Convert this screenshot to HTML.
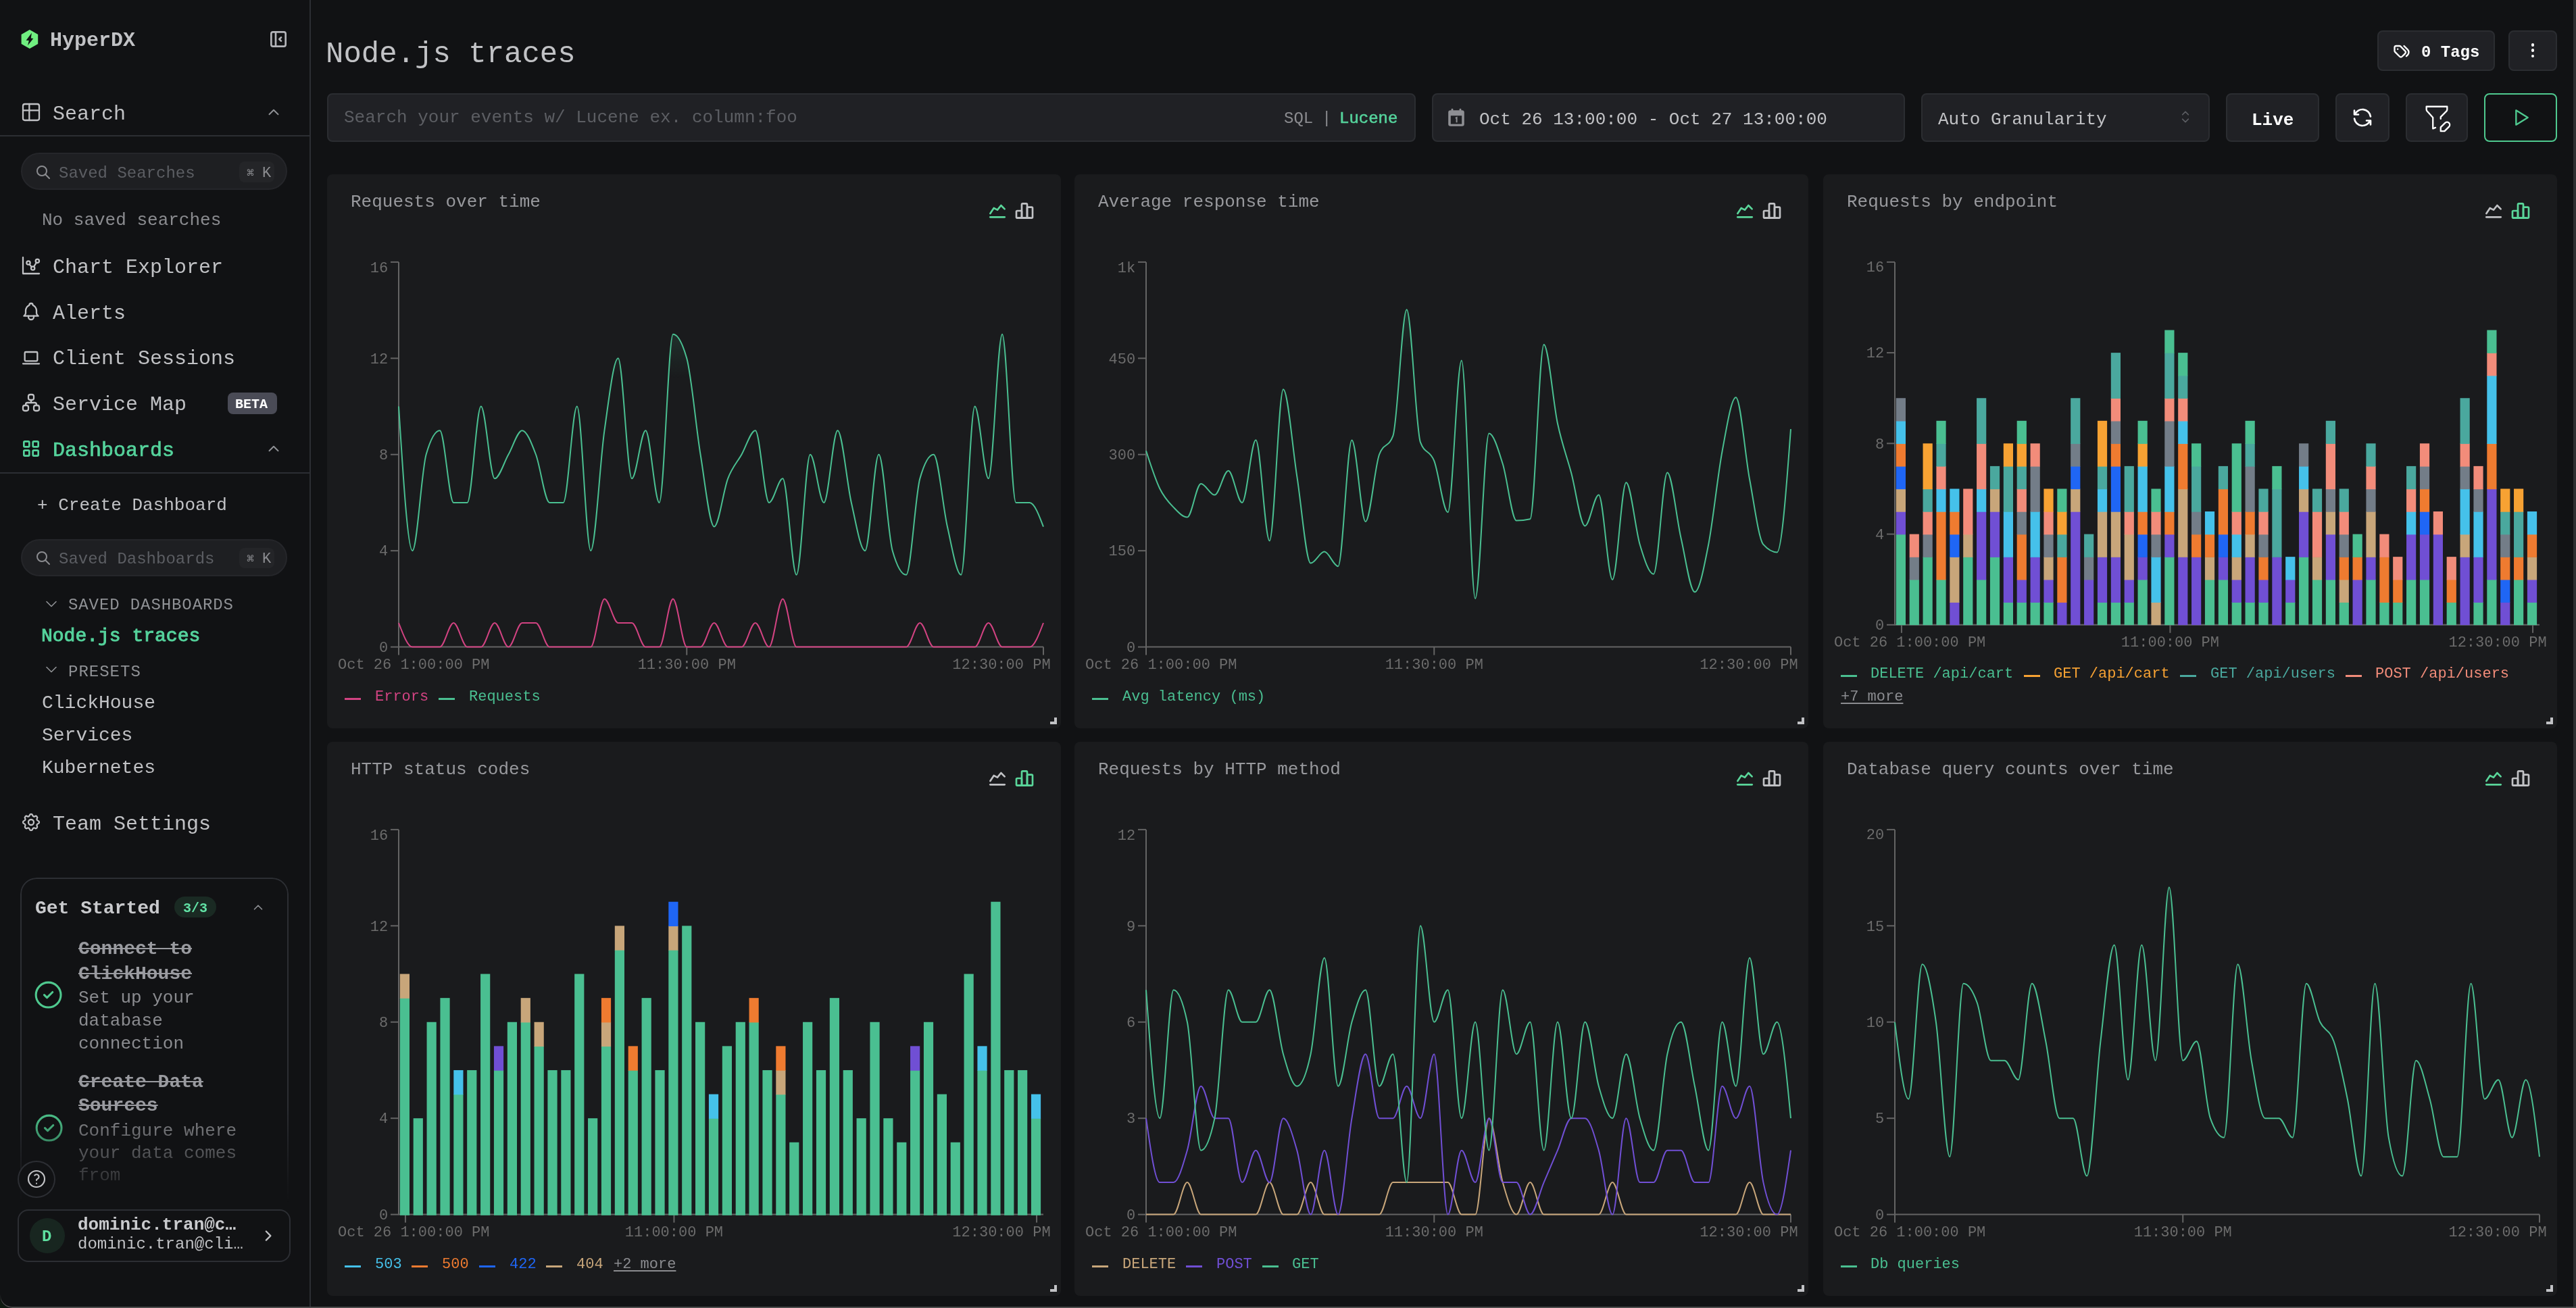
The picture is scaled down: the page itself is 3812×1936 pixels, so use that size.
<!DOCTYPE html>
<html><head><meta charset="utf-8"><title>Node.js traces</title><style>
html,body{margin:0;padding:0;background:#0f1a11;overflow:hidden}
#root{position:relative;width:1906px;height:968px;zoom:2;background:#111214;overflow:hidden;border-bottom-left-radius:9px;font-family:'Liberation Mono', monospace}
#sb{position:absolute;left:0;top:0;width:229px;height:968px;background:#111214;border-right:1px solid #2c2e33}
.t{position:absolute;white-space:pre;line-height:1;font-family:'Liberation Mono', monospace;-webkit-font-smoothing:antialiased;will-change:transform}
.pill{position:absolute;border-radius:14px;background:#1e1f22;border:1px solid #25262a;box-sizing:border-box}
.kbd{position:absolute;border-radius:4px;background:#242528}
.inp{position:absolute;border-radius:4px;background:#202125;border:1px solid #2b2d31;box-sizing:border-box}
.btn{position:absolute;border-radius:4px;background:#202125;border:1px solid #2b2d31;box-sizing:border-box}
.panel{position:absolute;background:#1a1b1d;border-radius:4px;overflow:hidden}
.ch{position:absolute;left:0;top:0;will-change:transform}
.ax{font-family:'Liberation Mono', monospace;font-size:11px;fill:#6c6c6c}
</style></head>
<body><div id="root"><div id="sb"><svg style="position:absolute;left:15.5px;top:21.5px" width="13" height="15" viewBox="0 0 26 30"><path d="M12.9 0.9L25.2 7.9V21.9L12.9 28.9L0.6 21.9V7.9Z" fill="#70ef80"/><path d="M15.9 5.8L7.6 16.8L11.8 17.1L10.1 24.2L18.3 13.9L14.8 13.6Z" fill="#111214"/></svg><div class="t" style="left:36.85px;top:22.36px;font-size:15px;color:#c1c2c5;font-weight:700;">HyperDX</div><svg style="position:absolute;left:198.00px;top:21.00px;" width="16" height="16" viewBox="0 0 24 24" fill="none" stroke="#b4b5ba" stroke-width="2" stroke-linecap="round" stroke-linejoin="round"><path d="M4 6a2 2 0 0 1 2 -2h12a2 2 0 0 1 2 2v12a2 2 0 0 1 -2 2h-12a2 2 0 0 1 -2 -2z"/><path d="M9 4v16"/><path d="M15 10l-2 2l2 2"/></svg><svg style="position:absolute;left:15.00px;top:75.00px;" width="16" height="16" viewBox="0 0 24 24" fill="none" stroke="#c1c2c5" stroke-width="1.7" stroke-linecap="round" stroke-linejoin="round"><path d="M3 5a2 2 0 0 1 2 -2h14a2 2 0 0 1 2 2v14a2 2 0 0 1 -2 2h-14a2 2 0 0 1 -2 -2v-14z"/><path d="M3 10h18"/><path d="M10 3v18"/></svg><div class="t" style="left:38.80px;top:76.91px;font-size:15px;color:#c1c2c5;font-weight:400;">Search</div><svg style="position:absolute;left:196.00px;top:76.50px;" width="13" height="13" viewBox="0 0 24 24" fill="none" stroke="#909296" stroke-width="1.8" stroke-linecap="round" stroke-linejoin="round"><path d="M6 15l6 -6l6 6"/></svg><div style="position:absolute;left:0;top:100px;width:229px;height:1px;background:#2c2e33"></div><div class="pill" style="left:15.3px;top:113.2px;width:197.2px;height:27.5px"></div><svg style="position:absolute;left:26.00px;top:121.30px;" width="12" height="12" viewBox="0 0 24 24" fill="none" stroke="#8b8c90" stroke-width="2" stroke-linecap="round" stroke-linejoin="round"><path d="M10 10m-7 0a7 7 0 1 0 14 0a7 7 0 1 0 -14 0"/><path d="M21 21l-6 -6"/></svg><div class="t" style="left:43.60px;top:122.31px;font-size:12px;color:#5c5e63;font-weight:400;">Saved Searches</div><div class="kbd" style="left:177px;top:119.7px;width:26px;height:15.2px"></div><div class="t" style="left:182.50px;top:123.91px;font-size:9px;color:#8b8c90;font-weight:400;">&#8984;</div><div class="t" style="left:194.00px;top:122.87px;font-size:11px;color:#8b8c90;font-weight:400;">K</div><div class="t" style="left:30.80px;top:156.74px;font-size:13px;color:#8b8c90;font-weight:400;">No saved searches</div><svg style="position:absolute;left:15.00px;top:188.50px;" width="16" height="16" viewBox="0 0 24 24" fill="none" stroke="#c1c2c5" stroke-width="1.7" stroke-linecap="round" stroke-linejoin="round"><path d="M3 3v18h18"/><path d="M9 9m-2 0a2 2 0 1 0 4 0a2 2 0 1 0 -4 0"/><path d="M19 7m-2 0a2 2 0 1 0 4 0a2 2 0 1 0 -4 0"/><path d="M14 15m-2 0a2 2 0 1 0 4 0a2 2 0 1 0 -4 0"/><path d="M10.16 10.62l2.34 2.88"/><path d="M15.088 13.328l2.837 -4.586"/></svg><div class="t" style="left:38.80px;top:190.31px;font-size:15px;color:#c1c2c5;font-weight:400;">Chart Explorer</div><svg style="position:absolute;left:15.00px;top:222.50px;" width="16" height="16" viewBox="0 0 24 24" fill="none" stroke="#c1c2c5" stroke-width="1.7" stroke-linecap="round" stroke-linejoin="round"><path d="M10 5a2 2 0 1 1 4 0a7 7 0 0 1 4 6v3a4 4 0 0 0 2 3h-16a4 4 0 0 0 2 -3v-3a7 7 0 0 1 4 -6"/><path d="M9 17v1a3 3 0 0 0 6 0v-1"/></svg><div class="t" style="left:38.80px;top:224.31px;font-size:15px;color:#c1c2c5;font-weight:400;">Alerts</div><svg style="position:absolute;left:15.00px;top:256.40px;" width="16" height="16" viewBox="0 0 24 24" fill="none" stroke="#c1c2c5" stroke-width="1.7" stroke-linecap="round" stroke-linejoin="round"><path d="M3 19l18 0"/><path d="M5 6m0 1a1 1 0 0 1 1 -1h12a1 1 0 0 1 1 1v8a1 1 0 0 1 -1 1h-12a1 1 0 0 1 -1 -1z"/></svg><div class="t" style="left:38.80px;top:258.21px;font-size:15px;color:#c1c2c5;font-weight:400;">Client Sessions</div><svg style="position:absolute;left:15.00px;top:290.10px;" width="16" height="16" viewBox="0 0 24 24" fill="none" stroke="#c1c2c5" stroke-width="1.7" stroke-linecap="round" stroke-linejoin="round"><path d="M3 15m0 2a2 2 0 0 1 2 -2h2a2 2 0 0 1 2 2v2a2 2 0 0 1 -2 2h-2a2 2 0 0 1 -2 -2z"/><path d="M15 15m0 2a2 2 0 0 1 2 -2h2a2 2 0 0 1 2 2v2a2 2 0 0 1 -2 2h-2a2 2 0 0 1 -2 -2z"/><path d="M9 3m0 2a2 2 0 0 1 2 -2h2a2 2 0 0 1 2 2v2a2 2 0 0 1 -2 2h-2a2 2 0 0 1 -2 -2z"/><path d="M6 15v-1a2 2 0 0 1 2 -2h8a2 2 0 0 1 2 2v1"/><path d="M12 9l0 3"/></svg><div class="t" style="left:38.80px;top:291.91px;font-size:15px;color:#c1c2c5;font-weight:400;">Service Map</div><div style="position:absolute;left:168.7px;top:290.5px;width:36.2px;height:16px;border-radius:4px;background:#4a4b56"></div><div class="t" style="left:174.20px;top:294.54px;font-size:10px;color:#ffffff;font-weight:700;">BETA</div><svg style="position:absolute;left:15.00px;top:324.20px;" width="16" height="16" viewBox="0 0 24 24" fill="none" stroke="#55d39c" stroke-width="2" stroke-linecap="round" stroke-linejoin="round"><path d="M4 4m0 1a1 1 0 0 1 1 -1h4a1 1 0 0 1 1 1v4a1 1 0 0 1 -1 1h-4a1 1 0 0 1 -1 -1z"/><path d="M14 4m0 1a1 1 0 0 1 1 -1h4a1 1 0 0 1 1 1v4a1 1 0 0 1 -1 1h-4a1 1 0 0 1 -1 -1z"/><path d="M4 14m0 1a1 1 0 0 1 1 -1h4a1 1 0 0 1 1 1v4a1 1 0 0 1 -1 1h-4a1 1 0 0 1 -1 -1z"/><path d="M14 14m0 1a1 1 0 0 1 1 -1h4a1 1 0 0 1 1 1v4a1 1 0 0 1 -1 1h-4a1 1 0 0 1 -1 -1z"/></svg><div class="t" style="left:38.80px;top:326.01px;font-size:15px;color:#55d39c;font-weight:400;-webkit-text-stroke:0.35px #55d39c">Dashboards</div><svg style="position:absolute;left:196.00px;top:325.50px;" width="13" height="13" viewBox="0 0 24 24" fill="none" stroke="#909296" stroke-width="1.8" stroke-linecap="round" stroke-linejoin="round"><path d="M6 15l6 -6l6 6"/></svg><div style="position:absolute;left:0;top:349.5px;width:229px;height:1px;background:#2c2e33"></div><div class="t" style="left:27.60px;top:367.54px;font-size:13px;color:#c1c2c5;font-weight:400;">+ Create Dashboard</div><div class="pill" style="left:15.3px;top:398.8px;width:197.2px;height:27.5px"></div><svg style="position:absolute;left:26.00px;top:406.90px;" width="12" height="12" viewBox="0 0 24 24" fill="none" stroke="#8b8c90" stroke-width="2" stroke-linecap="round" stroke-linejoin="round"><path d="M10 10m-7 0a7 7 0 1 0 14 0a7 7 0 1 0 -14 0"/><path d="M21 21l-6 -6"/></svg><div class="t" style="left:43.60px;top:407.91px;font-size:12px;color:#5c5e63;font-weight:400;">Saved Dashboards</div><div class="kbd" style="left:177px;top:405.3px;width:26px;height:15.2px"></div><div class="t" style="left:182.50px;top:409.51px;font-size:9px;color:#8b8c90;font-weight:400;">&#8984;</div><div class="t" style="left:194.00px;top:408.47px;font-size:11px;color:#8b8c90;font-weight:400;">K</div><svg style="position:absolute;left:31.10px;top:439.90px;" width="14" height="14" viewBox="0 0 24 24" fill="none" stroke="#909296" stroke-width="1.4" stroke-linecap="round" stroke-linejoin="round"><path d="M6 9l6 6l6 -6"/></svg><div class="t" style="left:50.60px;top:442.21px;font-size:12px;color:#909296;font-weight:400;letter-spacing:0.45px">SAVED DASHBOARDS</div><div class="t" style="left:30.60px;top:463.97px;font-size:14px;color:#55d39c;font-weight:400;-webkit-text-stroke:0.5px #55d39c">Node.js traces</div><svg style="position:absolute;left:31.10px;top:488.60px;" width="14" height="14" viewBox="0 0 24 24" fill="none" stroke="#909296" stroke-width="1.4" stroke-linecap="round" stroke-linejoin="round"><path d="M6 9l6 6l6 -6"/></svg><div class="t" style="left:50.60px;top:491.61px;font-size:12px;color:#909296;font-weight:400;letter-spacing:0.5px">PRESETS</div><div class="t" style="left:31.20px;top:513.27px;font-size:14px;color:#c1c2c5;font-weight:400;">ClickHouse</div><div class="t" style="left:31.20px;top:537.47px;font-size:14px;color:#c1c2c5;font-weight:400;">Services</div><div class="t" style="left:31.20px;top:561.37px;font-size:14px;color:#c1c2c5;font-weight:400;">Kubernetes</div><svg style="position:absolute;left:15.00px;top:600.50px;" width="16" height="16" viewBox="0 0 24 24" fill="none" stroke="#c1c2c5" stroke-width="1.7" stroke-linecap="round" stroke-linejoin="round"><path d="M10.325 4.317c.426 -1.756 2.924 -1.756 3.35 0a1.724 1.724 0 0 0 2.573 1.066c1.543 -.94 3.31 .826 2.37 2.37a1.724 1.724 0 0 0 1.065 2.572c1.756 .426 1.756 2.924 0 3.35a1.724 1.724 0 0 0 -1.066 2.573c.94 1.543 -.826 3.31 -2.37 2.37a1.724 1.724 0 0 0 -2.572 1.065c-.426 1.756 -2.924 1.756 -3.35 0a1.724 1.724 0 0 0 -2.573 -1.066c-1.543 .94 -3.31 -.826 -2.37 -2.37a1.724 1.724 0 0 0 -1.065 -2.572c-1.756 -.426 -1.756 -2.924 0 -3.35a1.724 1.724 0 0 0 1.066 -2.573c-.94 -1.543 .826 -3.31 2.37 -2.37c1 .608 2.296 .07 2.572 -1.065z"/><path d="M9 12a3 3 0 1 0 6 0a3 3 0 0 0 -6 0"/></svg><div class="t" style="left:38.80px;top:602.31px;font-size:15px;color:#c1c2c5;font-weight:400;">Team Settings</div><div style="position:absolute;left:14.8px;top:649.7px;width:198.6px;height:250px;border:1px solid #2c2e33;border-bottom:none;border-radius:12px 12px 0 0;box-sizing:border-box;-webkit-mask-image:linear-gradient(#000 0,#000 170px,transparent 240px)"></div><div class="t" style="left:26.00px;top:665.27px;font-size:14px;color:#c9cacd;font-weight:700;">Get Started</div><div style="position:absolute;left:129.2px;top:663.5px;width:30.6px;height:15.7px;border-radius:8px;background:#1a2a23"></div><div class="t" style="left:135.70px;top:667.54px;font-size:10px;color:#62e3a6;font-weight:700;">3/3</div><svg style="position:absolute;left:185.50px;top:666.00px;" width="11" height="11" viewBox="0 0 24 24" fill="none" stroke="#909296" stroke-width="1.8" stroke-linecap="round" stroke-linejoin="round"><path d="M6 15l6 -6l6 6"/></svg><div id="gsmask" style="position:absolute;left:15px;top:690px;width:198px;height:200px;-webkit-mask-image:linear-gradient(#000 0,#000 130px,rgba(0,0,0,0.25) 185px,transparent 200px)"><svg style="position:absolute;left:8.60px;top:34.20px;" width="24.6" height="24.6" viewBox="0 0 24 24" fill="none" stroke="#4fc98f" stroke-width="1.5" stroke-linecap="round" stroke-linejoin="round"><path d="M12 12m-9 0a9 9 0 1 0 18 0a9 9 0 1 0 -18 0"/><path d="M9 12l2 2l4 -4"/></svg><div class="t" style="left:42.80px;top:5.27px;font-size:14px;color:#9a9ba0;font-weight:700;text-decoration:line-through">Connect to</div><div class="t" style="left:42.80px;top:23.87px;font-size:14px;color:#9a9ba0;font-weight:700;text-decoration:line-through">ClickHouse</div><div class="t" style="left:42.80px;top:42.24px;font-size:13px;color:#8b8c90;font-weight:400;">Set up your</div><div class="t" style="left:42.80px;top:59.04px;font-size:13px;color:#8b8c90;font-weight:400;">database</div><div class="t" style="left:42.80px;top:75.94px;font-size:13px;color:#8b8c90;font-weight:400;">connection</div><svg style="position:absolute;left:8.80px;top:132.50px;" width="24.6" height="24.6" viewBox="0 0 24 24" fill="none" stroke="#4fc98f" stroke-width="1.5" stroke-linecap="round" stroke-linejoin="round"><path d="M12 12m-9 0a9 9 0 1 0 18 0a9 9 0 1 0 -18 0"/><path d="M9 12l2 2l4 -4"/></svg><div class="t" style="left:42.80px;top:103.77px;font-size:14px;color:#9a9ba0;font-weight:700;text-decoration:line-through">Create Data</div><div class="t" style="left:42.80px;top:121.67px;font-size:14px;color:#9a9ba0;font-weight:700;text-decoration:line-through">Sources</div><div class="t" style="left:42.80px;top:140.44px;font-size:13px;color:#8b8c90;font-weight:400;">Configure where</div><div class="t" style="left:42.80px;top:157.24px;font-size:13px;color:#8b8c90;font-weight:400;">your data comes</div><div class="t" style="left:42.80px;top:173.74px;font-size:13px;color:#8b8c90;font-weight:400;">from</div></div><div style="position:absolute;left:13.2px;top:858.8px;width:27.8px;height:27.6px;border-radius:50%;border:1px solid #2c2e33;box-sizing:border-box;background:#111214"></div><svg style="position:absolute;left:19.10px;top:864.60px;" width="16" height="16" viewBox="0 0 24 24" fill="none" stroke="#c1c2c5" stroke-width="1.6" stroke-linecap="round" stroke-linejoin="round"><path d="M12 12m-9 0a9 9 0 1 0 18 0a9 9 0 1 0 -18 0"/><path d="M12 17l0 .01"/><path d="M12 13.5a1.5 1.5 0 0 1 1 -1.5a2.6 2.6 0 1 0 -3 -4"/></svg><div style="position:absolute;left:13.2px;top:895px;width:201.7px;height:38.8px;border-radius:8px;border:1px solid #2c2e33;box-sizing:border-box"></div><div style="position:absolute;left:22px;top:901.5px;width:25.9px;height:25.8px;border-radius:50%;background:#182620"></div><div class="t" style="left:31.00px;top:909.41px;font-size:12px;color:#5ee0a0;font-weight:700;">D</div><div class="t" style="left:57.60px;top:900.04px;font-size:13px;color:#c9cacd;font-weight:700;">dominic.tran@c&hellip;</div><div class="t" style="left:57.60px;top:915.01px;font-size:12px;color:#c1c2c5;font-weight:400;">dominic.tran@cli&hellip;</div><svg style="position:absolute;left:191.90px;top:907.90px;" width="13.1" height="13.1" viewBox="0 0 24 24" fill="none" stroke="#c1c2c5" stroke-width="2.1" stroke-linecap="round" stroke-linejoin="round"><path d="M9 6l6 6l-6 6"/></svg></div><div class="t" style="left:241.20px;top:29.05px;font-size:22px;color:#c1c2c5;font-weight:400;">Node.js traces</div><div class="btn" style="left:1759px;top:22.5px;width:87px;height:30px"></div><svg style="position:absolute;left:1770.00px;top:30.70px;" width="14" height="14" viewBox="0 0 24 24" fill="none" stroke="#ffffff" stroke-width="2" stroke-linecap="round" stroke-linejoin="round"><path d="M3 8v4.172a2 2 0 0 0 .586 1.414l5.71 5.71a2.41 2.41 0 0 0 3.408 0l3.592 -3.592a2.41 2.41 0 0 0 0 -3.408l-5.71 -5.71a2 2 0 0 0 -1.414 -.586h-4.172a2 2 0 0 0 -2 2z"/><path d="M18 19l1.592 -1.592a4.82 4.82 0 0 0 0 -6.816l-4.592 -4.592"/><path d="M7 10h-.01"/></svg><div class="t" style="left:1791.70px;top:32.91px;font-size:12px;color:#ffffff;font-weight:700;">0 Tags</div><div class="btn" style="left:1856px;top:22.5px;width:36px;height:30px"></div><div style="position:absolute;left:1872.8px;top:32.15px;width:2.4px;height:2.4px;border-radius:50%;background:#fff"></div><div style="position:absolute;left:1872.8px;top:36.20px;width:2.4px;height:2.4px;border-radius:50%;background:#fff"></div><div style="position:absolute;left:1872.8px;top:40.25px;width:2.4px;height:2.4px;border-radius:50%;background:#fff"></div><div class="inp" style="left:242px;top:69px;width:805.5px;height:36px"></div><div class="t" style="left:254.40px;top:80.44px;font-size:13px;color:#5c5e63;font-weight:400;">Search your events w/ Lucene ex. column:foo</div><div class="t" style="left:950.00px;top:82.21px;font-size:12px;color:#8b8c90;font-weight:400;">SQL</div><div class="t" style="left:978.00px;top:82.21px;font-size:12px;color:#8b8c90;font-weight:400;">|</div><div class="t" style="left:991.10px;top:82.21px;font-size:12px;color:#55d39c;font-weight:400;-webkit-text-stroke:0.3px #55d39c">Lucene</div><div class="inp" style="left:1059.5px;top:69px;width:350px;height:36px"></div><svg style="position:absolute;left:1071px;top:80px" width="13" height="14" viewBox="0 0 13 14"><rect x="0.6" y="1.6" width="11.8" height="11.8" rx="1.6" fill="#8e8f93"/><rect x="2.4" y="5.6" width="8.2" height="6.2" fill="#202124"/><rect x="2.8" y="0.4" width="1.4" height="2.4" rx="0.6" fill="#8e8f93"/><rect x="8.8" y="0.4" width="1.4" height="2.4" rx="0.6" fill="#8e8f93"/><path d="M5.9 7.4l0.9 -0.4v3.6" stroke="#8e8f93" stroke-width="1" fill="none"/></svg><div class="t" style="left:1094.30px;top:81.84px;font-size:13px;color:#c1c2c5;font-weight:400;">Oct 26 13:00:00 - Oct 27 13:00:00</div><div class="inp" style="left:1421.5px;top:69px;width:213.5px;height:36px"></div><div class="t" style="left:1434.20px;top:82.04px;font-size:13px;color:#c1c2c5;font-weight:400;">Auto Granularity</div><svg style="position:absolute;left:1610.50px;top:80.00px;" width="13" height="13" viewBox="0 0 24 24" fill="none" stroke="#5c5e63" stroke-width="1.6" stroke-linecap="round" stroke-linejoin="round"><path d="M8 9l4 -4l4 4"/><path d="M16 15l-4 4l-4 -4"/></svg><div class="btn" style="left:1647px;top:69px;width:69px;height:36px"></div><div class="t" style="left:1665.80px;top:82.64px;font-size:13px;color:#ffffff;font-weight:700;">Live</div><div class="btn" style="left:1728px;top:69px;width:40px;height:36px"></div><svg style="position:absolute;left:1739.10px;top:77.90px;" width="18" height="18" viewBox="0 0 24 24" fill="none" stroke="#ffffff" stroke-width="1.75" stroke-linecap="round" stroke-linejoin="round"><path d="M20 11a8.1 8.1 0 0 0 -15.5 -2m-.5 -4v4h4"/><path d="M4 13a8.1 8.1 0 0 0 15.5 2m.5 4v-4h-4"/></svg><div class="btn" style="left:1780px;top:69px;width:46px;height:36px"></div><svg style="position:absolute;left:1791.50px;top:75.80px;" width="23" height="23" viewBox="0 0 24 24" fill="none" stroke="#ffffff" stroke-width="1.2" stroke-linecap="round" stroke-linejoin="round"><path d="M10.97 19.25l-1.97 .75v-8.5l-4.48 -4.928a2 2 0 0 1 -.52 -1.345v-2.227h16v2.172a2 2 0 0 1 -.586 1.414l-4.414 4.414v1.5"/><path d="M18.42 15.61a2.1 2.1 0 0 1 2.97 2.97l-3.39 3.42h-3v-3l3.42 -3.39z"/></svg><div class="btn" style="left:1838px;top:69px;width:54px;height:36px;border-color:#4fc98f;background:#111214"></div><svg style="position:absolute;left:1857.00px;top:79.00px;" width="16" height="16" viewBox="0 0 24 24" fill="none" stroke="#4fc98f" stroke-width="1.8" stroke-linecap="round" stroke-linejoin="round"><path d="M7 4v16l13 -8z"/></svg><div class="panel" style="left:242px;top:129px;width:543px;height:410px"><div class="t" style="left:17.60px;top:14.04px;font-size:13px;color:#98999d;font-weight:400;">Requests over time</div><svg style="position:absolute;left:488.00px;top:18.85px;" width="16" height="16" viewBox="0 0 24 24" fill="none" stroke="#5ad69a" stroke-width="2" stroke-linecap="round" stroke-linejoin="round"><path d="M4 19l16 0"/><path d="M4 15l4 -6l4 2l4 -5l4 4"/></svg><svg style="position:absolute;left:508.20px;top:19.10px;" width="16" height="16" viewBox="0 0 24 24" fill="none" stroke="#c1c2c5" stroke-width="2" stroke-linecap="round" stroke-linejoin="round"><path d="M3 13a1 1 0 0 1 1 -1h4a1 1 0 0 1 1 1v6a1 1 0 0 1 -1 1h-4a1 1 0 0 1 -1 -1z"/><path d="M15 9a1 1 0 0 1 1 -1h4a1 1 0 0 1 1 1v10a1 1 0 0 1 -1 1h-4a1 1 0 0 1 -1 -1z"/><path d="M9 5a1 1 0 0 1 1 -1h4a1 1 0 0 1 1 1v14a1 1 0 0 1 -1 1h-4a1 1 0 0 1 -1 -1z"/><path d="M4 20h14"/></svg><svg class="ch" width="543" height="410" viewBox="0 0 543 410"><path d="M53.0,64.95V349.8H530.0" fill="none" stroke="#646464" stroke-width="1"/><path d="M47.0,349.80H53.0" stroke="#646464" stroke-width="1"/><text x="45.1" y="353.40" text-anchor="end" class="ax">0</text><path d="M47.0,278.59H53.0" stroke="#646464" stroke-width="1"/><text x="45.1" y="282.19" text-anchor="end" class="ax">4</text><path d="M47.0,207.38H53.0" stroke="#646464" stroke-width="1"/><text x="45.1" y="210.97" text-anchor="end" class="ax">8</text><path d="M47.0,136.16H53.0" stroke="#646464" stroke-width="1"/><text x="45.1" y="139.76" text-anchor="end" class="ax">12</text><path d="M47.0,64.95H53.0" stroke="#646464" stroke-width="1"/><text x="45.1" y="72.25" text-anchor="end" class="ax">16</text><path d="M53.00,349.8V355.8" stroke="#646464" stroke-width="1"/><path d="M266.13,349.8V355.8" stroke="#646464" stroke-width="1"/><path d="M530.00,349.8V355.8" stroke="#646464" stroke-width="1"/><text x="8.0" y="366.00" class="ax">Oct 26 1:00:00 PM</text><text x="266.13" y="366.00" text-anchor="middle" class="ax">11:30:00 PM</text><text x="535.3" y="366.00" text-anchor="end" class="ax">12:30:00 PM</text><defs><linearGradient id="g0_0" x1="0" y1="0" x2="0" y2="1"><stop offset="0" stop-color="#d24382" stop-opacity="0.13"/><stop offset="0.14" stop-color="#d24382" stop-opacity="0"/></linearGradient></defs><path d="M53.00,332.00C56.38,340.90,59.77,349.80,63.15,349.80C66.53,349.80,69.91,349.80,73.30,349.80C76.68,349.80,80.06,349.80,83.45,349.80C86.83,349.80,90.21,332.00,93.60,332.00C96.98,332.00,100.36,349.80,103.74,349.80C107.13,349.80,110.51,349.80,113.89,349.80C117.28,349.80,120.66,332.00,124.04,332.00C127.43,332.00,130.81,349.80,134.19,349.80C137.57,349.80,140.96,332.00,144.34,332.00C147.72,332.00,151.11,332.00,154.49,332.00C157.87,332.00,161.26,349.80,164.64,349.80C168.02,349.80,171.40,349.80,174.79,349.80C178.17,349.80,181.55,349.80,184.94,349.80C188.32,349.80,191.70,349.80,195.09,349.80C198.47,349.80,201.85,314.19,205.23,314.19C208.62,314.19,212.00,332.00,215.38,332.00C218.77,332.00,222.15,332.00,225.53,332.00C228.91,332.00,232.30,349.80,235.68,349.80C239.06,349.80,242.45,349.80,245.83,349.80C249.21,349.80,252.60,314.19,255.98,314.19C259.36,314.19,262.74,349.80,266.13,349.80C269.51,349.80,272.89,349.80,276.28,349.80C279.66,349.80,283.04,332.00,286.43,332.00C289.81,332.00,293.19,349.80,296.57,349.80C299.96,349.80,303.34,349.80,306.72,349.80C310.11,349.80,313.49,332.00,316.87,332.00C320.26,332.00,323.64,349.80,327.02,349.80C330.40,349.80,333.79,314.19,337.17,314.19C340.55,314.19,343.94,349.80,347.32,349.80C350.70,349.80,354.09,349.80,357.47,349.80C360.85,349.80,364.23,349.80,367.62,349.80C371.00,349.80,374.38,349.80,377.77,349.80C381.15,349.80,384.53,349.80,387.91,349.80C391.30,349.80,394.68,349.80,398.06,349.80C401.45,349.80,404.83,349.80,408.21,349.80C411.60,349.80,414.98,349.80,418.36,349.80C421.74,349.80,425.13,349.80,428.51,349.80C431.89,349.80,435.28,332.00,438.66,332.00C442.04,332.00,445.43,349.80,448.81,349.80C452.19,349.80,455.57,349.80,458.96,349.80C462.34,349.80,465.72,349.80,469.11,349.80C472.49,349.80,475.87,349.80,479.26,349.80C482.64,349.80,486.02,332.00,489.40,332.00C492.79,332.00,496.17,349.80,499.55,349.80C502.94,349.80,506.32,349.80,509.70,349.80C513.09,349.80,516.47,349.80,519.85,349.80C523.23,349.80,526.62,340.90,530.00,332.00L530.00,349.8L53.00,349.8Z" fill="url(#g0_0)" stroke="none"/><path d="M53.00,332.00C56.38,340.90,59.77,349.80,63.15,349.80C66.53,349.80,69.91,349.80,73.30,349.80C76.68,349.80,80.06,349.80,83.45,349.80C86.83,349.80,90.21,332.00,93.60,332.00C96.98,332.00,100.36,349.80,103.74,349.80C107.13,349.80,110.51,349.80,113.89,349.80C117.28,349.80,120.66,332.00,124.04,332.00C127.43,332.00,130.81,349.80,134.19,349.80C137.57,349.80,140.96,332.00,144.34,332.00C147.72,332.00,151.11,332.00,154.49,332.00C157.87,332.00,161.26,349.80,164.64,349.80C168.02,349.80,171.40,349.80,174.79,349.80C178.17,349.80,181.55,349.80,184.94,349.80C188.32,349.80,191.70,349.80,195.09,349.80C198.47,349.80,201.85,314.19,205.23,314.19C208.62,314.19,212.00,332.00,215.38,332.00C218.77,332.00,222.15,332.00,225.53,332.00C228.91,332.00,232.30,349.80,235.68,349.80C239.06,349.80,242.45,349.80,245.83,349.80C249.21,349.80,252.60,314.19,255.98,314.19C259.36,314.19,262.74,349.80,266.13,349.80C269.51,349.80,272.89,349.80,276.28,349.80C279.66,349.80,283.04,332.00,286.43,332.00C289.81,332.00,293.19,349.80,296.57,349.80C299.96,349.80,303.34,349.80,306.72,349.80C310.11,349.80,313.49,332.00,316.87,332.00C320.26,332.00,323.64,349.80,327.02,349.80C330.40,349.80,333.79,314.19,337.17,314.19C340.55,314.19,343.94,349.80,347.32,349.80C350.70,349.80,354.09,349.80,357.47,349.80C360.85,349.80,364.23,349.80,367.62,349.80C371.00,349.80,374.38,349.80,377.77,349.80C381.15,349.80,384.53,349.80,387.91,349.80C391.30,349.80,394.68,349.80,398.06,349.80C401.45,349.80,404.83,349.80,408.21,349.80C411.60,349.80,414.98,349.80,418.36,349.80C421.74,349.80,425.13,349.80,428.51,349.80C431.89,349.80,435.28,332.00,438.66,332.00C442.04,332.00,445.43,349.80,448.81,349.80C452.19,349.80,455.57,349.80,458.96,349.80C462.34,349.80,465.72,349.80,469.11,349.80C472.49,349.80,475.87,349.80,479.26,349.80C482.64,349.80,486.02,332.00,489.40,332.00C492.79,332.00,496.17,349.80,499.55,349.80C502.94,349.80,506.32,349.80,509.70,349.80C513.09,349.80,516.47,349.80,519.85,349.80C523.23,349.80,526.62,340.90,530.00,332.00" fill="none" stroke="#d24382" stroke-width="1"/><defs><linearGradient id="g0_1" x1="0" y1="0" x2="0" y2="1"><stop offset="0" stop-color="#4abf91" stop-opacity="0.13"/><stop offset="0.14" stop-color="#4abf91" stop-opacity="0"/></linearGradient></defs><path d="M53.00,171.77C56.38,225.18,59.77,278.59,63.15,278.59C66.53,278.59,69.91,219.24,73.30,207.38C76.68,195.51,80.06,189.57,83.45,189.57C86.83,189.57,90.21,242.98,93.60,242.98C96.98,242.98,100.36,242.98,103.74,242.98C107.13,242.98,110.51,171.77,113.89,171.77C117.28,171.77,120.66,225.18,124.04,225.18C127.43,225.18,130.81,213.31,134.19,207.38C137.57,201.44,140.96,189.57,144.34,189.57C147.72,189.57,151.11,198.47,154.49,207.38C157.87,216.28,161.26,242.98,164.64,242.98C168.02,242.98,171.40,242.98,174.79,242.98C178.17,242.98,181.55,171.77,184.94,171.77C188.32,171.77,191.70,278.59,195.09,278.59C198.47,278.59,201.85,213.31,205.23,189.57C208.62,165.83,212.00,136.16,215.38,136.16C218.77,136.16,222.15,225.18,225.53,225.18C228.91,225.18,232.30,189.57,235.68,189.57C239.06,189.57,242.45,242.98,245.83,242.98C249.21,242.98,252.60,118.36,255.98,118.36C259.36,118.36,262.74,124.29,266.13,136.16C269.51,148.03,272.89,186.60,276.28,207.38C279.66,228.15,283.04,260.78,286.43,260.78C289.81,260.78,293.19,234.08,296.57,225.18C299.96,216.28,303.34,213.31,306.72,207.38C310.11,201.44,313.49,189.57,316.87,189.57C320.26,189.57,323.64,242.98,327.02,242.98C330.40,242.98,333.79,225.18,337.17,225.18C340.55,225.18,343.94,296.39,347.32,296.39C350.70,296.39,354.09,207.38,357.47,207.38C360.85,207.38,364.23,242.98,367.62,242.98C371.00,242.98,374.38,189.57,377.77,189.57C381.15,189.57,384.53,228.15,387.91,242.98C391.30,257.82,394.68,278.59,398.06,278.59C401.45,278.59,404.83,207.38,408.21,207.38C411.60,207.38,414.98,266.72,418.36,278.59C421.74,290.46,425.13,296.39,428.51,296.39C431.89,296.39,435.28,237.05,438.66,225.18C442.04,213.31,445.43,207.38,448.81,207.38C452.19,207.38,455.57,245.95,458.96,260.78C462.34,275.62,465.72,296.39,469.11,296.39C472.49,296.39,475.87,171.77,479.26,171.77C482.64,171.77,486.02,225.18,489.40,225.18C492.79,225.18,496.17,118.36,499.55,118.36C502.94,118.36,506.32,242.98,509.70,242.98C513.09,242.98,516.47,242.98,519.85,242.98C523.23,242.98,526.62,251.88,530.00,260.78L530.00,349.8L53.00,349.8Z" fill="url(#g0_1)" stroke="none"/><path d="M53.00,171.77C56.38,225.18,59.77,278.59,63.15,278.59C66.53,278.59,69.91,219.24,73.30,207.38C76.68,195.51,80.06,189.57,83.45,189.57C86.83,189.57,90.21,242.98,93.60,242.98C96.98,242.98,100.36,242.98,103.74,242.98C107.13,242.98,110.51,171.77,113.89,171.77C117.28,171.77,120.66,225.18,124.04,225.18C127.43,225.18,130.81,213.31,134.19,207.38C137.57,201.44,140.96,189.57,144.34,189.57C147.72,189.57,151.11,198.47,154.49,207.38C157.87,216.28,161.26,242.98,164.64,242.98C168.02,242.98,171.40,242.98,174.79,242.98C178.17,242.98,181.55,171.77,184.94,171.77C188.32,171.77,191.70,278.59,195.09,278.59C198.47,278.59,201.85,213.31,205.23,189.57C208.62,165.83,212.00,136.16,215.38,136.16C218.77,136.16,222.15,225.18,225.53,225.18C228.91,225.18,232.30,189.57,235.68,189.57C239.06,189.57,242.45,242.98,245.83,242.98C249.21,242.98,252.60,118.36,255.98,118.36C259.36,118.36,262.74,124.29,266.13,136.16C269.51,148.03,272.89,186.60,276.28,207.38C279.66,228.15,283.04,260.78,286.43,260.78C289.81,260.78,293.19,234.08,296.57,225.18C299.96,216.28,303.34,213.31,306.72,207.38C310.11,201.44,313.49,189.57,316.87,189.57C320.26,189.57,323.64,242.98,327.02,242.98C330.40,242.98,333.79,225.18,337.17,225.18C340.55,225.18,343.94,296.39,347.32,296.39C350.70,296.39,354.09,207.38,357.47,207.38C360.85,207.38,364.23,242.98,367.62,242.98C371.00,242.98,374.38,189.57,377.77,189.57C381.15,189.57,384.53,228.15,387.91,242.98C391.30,257.82,394.68,278.59,398.06,278.59C401.45,278.59,404.83,207.38,408.21,207.38C411.60,207.38,414.98,266.72,418.36,278.59C421.74,290.46,425.13,296.39,428.51,296.39C431.89,296.39,435.28,237.05,438.66,225.18C442.04,213.31,445.43,207.38,448.81,207.38C452.19,207.38,455.57,245.95,458.96,260.78C462.34,275.62,465.72,296.39,469.11,296.39C472.49,296.39,475.87,171.77,479.26,171.77C482.64,171.77,486.02,225.18,489.40,225.18C492.79,225.18,496.17,118.36,499.55,118.36C502.94,118.36,506.32,242.98,509.70,242.98C513.09,242.98,516.47,242.98,519.85,242.98C523.23,242.98,526.62,251.88,530.00,260.78" fill="none" stroke="#4abf91" stroke-width="1"/></svg><div style="position:absolute;left:13.00px;top:387.40px;width:12px;height:1.5px;background:#d24382"></div><div class="t" style="left:35.40px;top:381.57px;font-size:11px;color:#d24382;font-weight:400;">Errors</div><div style="position:absolute;left:82.50px;top:387.40px;width:12px;height:1.5px;background:#4abf91"></div><div class="t" style="left:104.90px;top:381.57px;font-size:11px;color:#4abf91;font-weight:400;">Requests</div><div style="position:absolute;left:535.00px;top:402px;width:5px;height:5px;border-right:2px solid #c1c2c5;border-bottom:2px solid #c1c2c5;box-sizing:border-box"></div></div><div class="panel" style="left:795px;top:129px;width:543px;height:410px"><div class="t" style="left:17.60px;top:14.04px;font-size:13px;color:#98999d;font-weight:400;">Average response time</div><svg style="position:absolute;left:488.00px;top:18.85px;" width="16" height="16" viewBox="0 0 24 24" fill="none" stroke="#5ad69a" stroke-width="2" stroke-linecap="round" stroke-linejoin="round"><path d="M4 19l16 0"/><path d="M4 15l4 -6l4 2l4 -5l4 4"/></svg><svg style="position:absolute;left:508.20px;top:19.10px;" width="16" height="16" viewBox="0 0 24 24" fill="none" stroke="#c1c2c5" stroke-width="2" stroke-linecap="round" stroke-linejoin="round"><path d="M3 13a1 1 0 0 1 1 -1h4a1 1 0 0 1 1 1v6a1 1 0 0 1 -1 1h-4a1 1 0 0 1 -1 -1z"/><path d="M15 9a1 1 0 0 1 1 -1h4a1 1 0 0 1 1 1v10a1 1 0 0 1 -1 1h-4a1 1 0 0 1 -1 -1z"/><path d="M9 5a1 1 0 0 1 1 -1h4a1 1 0 0 1 1 1v14a1 1 0 0 1 -1 1h-4a1 1 0 0 1 -1 -1z"/><path d="M4 20h14"/></svg><svg class="ch" width="543" height="410" viewBox="0 0 543 410"><path d="M53.0,64.95V349.8H530.0" fill="none" stroke="#646464" stroke-width="1"/><path d="M47.0,349.80H53.0" stroke="#646464" stroke-width="1"/><text x="45.1" y="353.40" text-anchor="end" class="ax">0</text><path d="M47.0,278.59H53.0" stroke="#646464" stroke-width="1"/><text x="45.1" y="282.19" text-anchor="end" class="ax">150</text><path d="M47.0,207.38H53.0" stroke="#646464" stroke-width="1"/><text x="45.1" y="210.97" text-anchor="end" class="ax">300</text><path d="M47.0,136.16H53.0" stroke="#646464" stroke-width="1"/><text x="45.1" y="139.76" text-anchor="end" class="ax">450</text><path d="M47.0,64.95H53.0" stroke="#646464" stroke-width="1"/><text x="45.1" y="72.25" text-anchor="end" class="ax">1k</text><path d="M53.00,349.8V355.8" stroke="#646464" stroke-width="1"/><path d="M266.13,349.8V355.8" stroke="#646464" stroke-width="1"/><path d="M530.00,349.8V355.8" stroke="#646464" stroke-width="1"/><text x="8.0" y="366.00" class="ax">Oct 26 1:00:00 PM</text><text x="266.13" y="366.00" text-anchor="middle" class="ax">11:30:00 PM</text><text x="535.3" y="366.00" text-anchor="end" class="ax">12:30:00 PM</text><defs><linearGradient id="g1_0" x1="0" y1="0" x2="0" y2="1"><stop offset="0" stop-color="#4abf91" stop-opacity="0.13"/><stop offset="0.14" stop-color="#4abf91" stop-opacity="0"/></linearGradient></defs><path d="M53.00,204.62C56.38,215.14,59.77,225.66,63.15,232.63C66.53,239.60,69.91,242.93,73.30,246.45C76.68,249.97,80.06,253.76,83.45,253.76C86.83,253.76,90.21,228.98,93.60,228.98C96.98,228.98,100.36,237.28,103.74,237.28C107.13,237.28,110.51,219.34,113.89,219.34C117.28,219.34,120.66,242.98,124.04,242.98C127.43,242.98,130.81,196.60,134.19,196.60C137.57,196.60,140.96,271.23,144.34,271.23C147.72,271.23,151.11,159.14,154.49,159.14C157.87,159.14,161.26,202.07,164.64,223.52C168.02,244.96,171.40,287.80,174.79,287.80C178.17,287.80,181.55,279.30,184.94,279.30C188.32,279.30,191.70,290.08,195.09,290.08C198.47,290.08,201.85,196.79,205.23,196.79C208.62,196.79,212.00,256.99,215.38,256.99C218.77,256.99,222.15,216.55,225.53,207.38C228.91,198.20,232.30,202.79,235.68,193.61C239.06,184.43,242.45,100.08,245.83,100.08C249.21,100.08,252.60,189.18,255.98,198.35C259.36,207.53,262.74,203.50,266.13,212.12C269.51,220.75,272.89,250.10,276.28,250.10C279.66,250.10,283.04,137.78,286.43,137.78C289.81,137.78,293.19,313.96,296.57,313.96C299.96,313.96,303.34,191.76,306.72,191.76C310.11,191.76,313.49,203.51,316.87,214.26C320.26,225.01,323.64,256.27,327.02,256.27C330.40,256.27,333.79,255.89,337.17,255.13C340.55,254.38,343.94,126.05,347.32,126.05C350.70,126.05,354.09,168.55,357.47,184.40C360.85,200.25,364.23,208.51,367.62,221.14C371.00,233.78,374.38,260.21,377.77,260.21C381.15,260.21,384.53,237.28,387.91,237.28C391.30,237.28,394.68,299.95,398.06,299.95C401.45,299.95,404.83,228.07,408.21,228.07C411.60,228.07,414.98,262.69,418.36,273.98C421.74,285.27,425.13,295.82,428.51,295.82C431.89,295.82,435.28,220.72,438.66,220.72C442.04,220.72,445.43,254.64,448.81,269.38C452.19,284.12,455.57,309.16,458.96,309.16C462.34,309.16,465.72,291.33,469.11,273.98C472.49,256.64,475.87,223.24,479.26,205.10C482.64,186.95,486.02,165.12,489.40,165.12C492.79,165.12,496.17,207.60,499.55,225.75C502.94,243.89,506.32,270.15,509.70,273.98C513.09,277.81,516.47,279.73,519.85,279.73C523.23,279.73,526.62,234.13,530.00,188.53L530.00,349.8L53.00,349.8Z" fill="url(#g1_0)" stroke="none"/><path d="M53.00,204.62C56.38,215.14,59.77,225.66,63.15,232.63C66.53,239.60,69.91,242.93,73.30,246.45C76.68,249.97,80.06,253.76,83.45,253.76C86.83,253.76,90.21,228.98,93.60,228.98C96.98,228.98,100.36,237.28,103.74,237.28C107.13,237.28,110.51,219.34,113.89,219.34C117.28,219.34,120.66,242.98,124.04,242.98C127.43,242.98,130.81,196.60,134.19,196.60C137.57,196.60,140.96,271.23,144.34,271.23C147.72,271.23,151.11,159.14,154.49,159.14C157.87,159.14,161.26,202.07,164.64,223.52C168.02,244.96,171.40,287.80,174.79,287.80C178.17,287.80,181.55,279.30,184.94,279.30C188.32,279.30,191.70,290.08,195.09,290.08C198.47,290.08,201.85,196.79,205.23,196.79C208.62,196.79,212.00,256.99,215.38,256.99C218.77,256.99,222.15,216.55,225.53,207.38C228.91,198.20,232.30,202.79,235.68,193.61C239.06,184.43,242.45,100.08,245.83,100.08C249.21,100.08,252.60,189.18,255.98,198.35C259.36,207.53,262.74,203.50,266.13,212.12C269.51,220.75,272.89,250.10,276.28,250.10C279.66,250.10,283.04,137.78,286.43,137.78C289.81,137.78,293.19,313.96,296.57,313.96C299.96,313.96,303.34,191.76,306.72,191.76C310.11,191.76,313.49,203.51,316.87,214.26C320.26,225.01,323.64,256.27,327.02,256.27C330.40,256.27,333.79,255.89,337.17,255.13C340.55,254.38,343.94,126.05,347.32,126.05C350.70,126.05,354.09,168.55,357.47,184.40C360.85,200.25,364.23,208.51,367.62,221.14C371.00,233.78,374.38,260.21,377.77,260.21C381.15,260.21,384.53,237.28,387.91,237.28C391.30,237.28,394.68,299.95,398.06,299.95C401.45,299.95,404.83,228.07,408.21,228.07C411.60,228.07,414.98,262.69,418.36,273.98C421.74,285.27,425.13,295.82,428.51,295.82C431.89,295.82,435.28,220.72,438.66,220.72C442.04,220.72,445.43,254.64,448.81,269.38C452.19,284.12,455.57,309.16,458.96,309.16C462.34,309.16,465.72,291.33,469.11,273.98C472.49,256.64,475.87,223.24,479.26,205.10C482.64,186.95,486.02,165.12,489.40,165.12C492.79,165.12,496.17,207.60,499.55,225.75C502.94,243.89,506.32,270.15,509.70,273.98C513.09,277.81,516.47,279.73,519.85,279.73C523.23,279.73,526.62,234.13,530.00,188.53" fill="none" stroke="#4abf91" stroke-width="1"/></svg><div style="position:absolute;left:13.00px;top:387.40px;width:12px;height:1.5px;background:#4abf91"></div><div class="t" style="left:35.40px;top:381.57px;font-size:11px;color:#4abf91;font-weight:400;">Avg latency (ms)</div><div style="position:absolute;left:535.00px;top:402px;width:5px;height:5px;border-right:2px solid #c1c2c5;border-bottom:2px solid #c1c2c5;box-sizing:border-box"></div></div><div class="panel" style="left:1348.8px;top:129px;width:543.2px;height:410px"><div class="t" style="left:17.60px;top:14.04px;font-size:13px;color:#98999d;font-weight:400;">Requests by endpoint</div><svg style="position:absolute;left:488.00px;top:18.85px;" width="16" height="16" viewBox="0 0 24 24" fill="none" stroke="#c1c2c5" stroke-width="2" stroke-linecap="round" stroke-linejoin="round"><path d="M4 19l16 0"/><path d="M4 15l4 -6l4 2l4 -5l4 4"/></svg><svg style="position:absolute;left:508.20px;top:19.10px;" width="16" height="16" viewBox="0 0 24 24" fill="none" stroke="#5ad69a" stroke-width="2" stroke-linecap="round" stroke-linejoin="round"><path d="M3 13a1 1 0 0 1 1 -1h4a1 1 0 0 1 1 1v6a1 1 0 0 1 -1 1h-4a1 1 0 0 1 -1 -1z"/><path d="M15 9a1 1 0 0 1 1 -1h4a1 1 0 0 1 1 1v10a1 1 0 0 1 -1 1h-4a1 1 0 0 1 -1 -1z"/><path d="M9 5a1 1 0 0 1 1 -1h4a1 1 0 0 1 1 1v14a1 1 0 0 1 -1 1h-4a1 1 0 0 1 -1 -1z"/><path d="M4 20h14"/></svg><svg class="ch" width="543.2" height="410" viewBox="0 0 543.2 410"><path d="M53.0,64.95V333.4H530.0" fill="none" stroke="#646464" stroke-width="1"/><path d="M47.0,333.40H53.0" stroke="#646464" stroke-width="1"/><text x="45.1" y="337.00" text-anchor="end" class="ax">0</text><path d="M47.0,266.29H53.0" stroke="#646464" stroke-width="1"/><text x="45.1" y="269.89" text-anchor="end" class="ax">4</text><path d="M47.0,199.17H53.0" stroke="#646464" stroke-width="1"/><text x="45.1" y="202.77" text-anchor="end" class="ax">8</text><path d="M47.0,132.06H53.0" stroke="#646464" stroke-width="1"/><text x="45.1" y="135.66" text-anchor="end" class="ax">12</text><path d="M47.0,64.95H53.0" stroke="#646464" stroke-width="1"/><text x="45.1" y="72.25" text-anchor="end" class="ax">16</text><path d="M57.97,333.4V339.4" stroke="#646464" stroke-width="1"/><path d="M256.72,333.4V339.4" stroke="#646464" stroke-width="1"/><path d="M525.03,333.4V339.4" stroke="#646464" stroke-width="1"/><text x="8.0" y="349.60" class="ax">Oct 26 1:00:00 PM</text><text x="256.72" y="349.60" text-anchor="middle" class="ax">11:00:00 PM</text><text x="535.3" y="349.60" text-anchor="end" class="ax">12:30:00 PM</text><rect x="53.90" y="266.29" width="7.1" height="67.31" fill="#4abf91"/><rect x="53.90" y="249.51" width="7.1" height="17.13" fill="#704fd4"/><rect x="53.90" y="232.73" width="7.1" height="17.13" fill="#c8a67a"/><rect x="53.90" y="215.95" width="7.1" height="17.13" fill="#1f66f5"/><rect x="53.90" y="199.17" width="7.1" height="17.13" fill="#ef7b30"/><rect x="53.90" y="182.40" width="7.1" height="17.13" fill="#45c1ea"/><rect x="53.90" y="165.62" width="7.1" height="17.13" fill="#737d88"/><rect x="63.84" y="299.84" width="7.1" height="33.76" fill="#4abf91"/><rect x="63.84" y="283.07" width="7.1" height="17.13" fill="#737d88"/><rect x="63.84" y="266.29" width="7.1" height="17.13" fill="#f28c7a"/><rect x="73.78" y="283.07" width="7.1" height="50.53" fill="#4abf91"/><rect x="73.78" y="266.29" width="7.1" height="17.13" fill="#737d88"/><rect x="73.78" y="249.51" width="7.1" height="17.13" fill="#f28c7a"/><rect x="73.78" y="232.73" width="7.1" height="17.13" fill="#4aa89e"/><rect x="73.78" y="199.17" width="7.1" height="33.91" fill="#f7a233"/><rect x="83.71" y="299.84" width="7.1" height="33.76" fill="#4abf91"/><rect x="83.71" y="249.51" width="7.1" height="50.68" fill="#ef7b30"/><rect x="83.71" y="232.73" width="7.1" height="17.13" fill="#45c1ea"/><rect x="83.71" y="215.95" width="7.1" height="17.13" fill="#f28c7a"/><rect x="83.71" y="199.17" width="7.1" height="17.13" fill="#4aa89e"/><rect x="83.71" y="182.40" width="7.1" height="17.13" fill="#4abf91"/><rect x="93.65" y="316.62" width="7.1" height="16.98" fill="#704fd4"/><rect x="93.65" y="283.07" width="7.1" height="33.91" fill="#c8a67a"/><rect x="93.65" y="266.29" width="7.1" height="17.13" fill="#1f66f5"/><rect x="93.65" y="249.51" width="7.1" height="17.13" fill="#ef7b30"/><rect x="93.65" y="232.73" width="7.1" height="17.13" fill="#45c1ea"/><rect x="103.59" y="283.07" width="7.1" height="50.53" fill="#4abf91"/><rect x="103.59" y="266.29" width="7.1" height="17.13" fill="#c8a67a"/><rect x="103.59" y="232.73" width="7.1" height="33.91" fill="#f28c7a"/><rect x="113.53" y="299.84" width="7.1" height="33.76" fill="#4abf91"/><rect x="113.53" y="249.51" width="7.1" height="50.68" fill="#704fd4"/><rect x="113.53" y="232.73" width="7.1" height="17.13" fill="#45c1ea"/><rect x="113.53" y="199.17" width="7.1" height="33.91" fill="#f28c7a"/><rect x="113.53" y="165.62" width="7.1" height="33.91" fill="#4aa89e"/><rect x="123.46" y="283.07" width="7.1" height="50.53" fill="#4abf91"/><rect x="123.46" y="249.51" width="7.1" height="33.91" fill="#704fd4"/><rect x="123.46" y="232.73" width="7.1" height="17.13" fill="#c8a67a"/><rect x="123.46" y="215.95" width="7.1" height="17.13" fill="#4aa89e"/><rect x="133.40" y="316.62" width="7.1" height="16.98" fill="#4abf91"/><rect x="133.40" y="283.07" width="7.1" height="33.91" fill="#704fd4"/><rect x="133.40" y="249.51" width="7.1" height="33.91" fill="#45c1ea"/><rect x="133.40" y="215.95" width="7.1" height="33.91" fill="#4aa89e"/><rect x="133.40" y="199.17" width="7.1" height="17.13" fill="#f7a233"/><rect x="143.34" y="316.62" width="7.1" height="16.98" fill="#4abf91"/><rect x="143.34" y="299.84" width="7.1" height="17.13" fill="#704fd4"/><rect x="143.34" y="266.29" width="7.1" height="33.91" fill="#ef7b30"/><rect x="143.34" y="249.51" width="7.1" height="17.13" fill="#737d88"/><rect x="143.34" y="232.73" width="7.1" height="17.13" fill="#f28c7a"/><rect x="143.34" y="215.95" width="7.1" height="17.13" fill="#4aa89e"/><rect x="143.34" y="199.17" width="7.1" height="17.13" fill="#f7a233"/><rect x="143.34" y="182.40" width="7.1" height="17.13" fill="#4abf91"/><rect x="153.28" y="316.62" width="7.1" height="16.98" fill="#4abf91"/><rect x="153.28" y="283.07" width="7.1" height="33.91" fill="#704fd4"/><rect x="153.28" y="249.51" width="7.1" height="33.91" fill="#45c1ea"/><rect x="153.28" y="215.95" width="7.1" height="33.91" fill="#737d88"/><rect x="153.28" y="199.17" width="7.1" height="17.13" fill="#f28c7a"/><rect x="163.21" y="316.62" width="7.1" height="16.98" fill="#4abf91"/><rect x="163.21" y="299.84" width="7.1" height="17.13" fill="#704fd4"/><rect x="163.21" y="283.07" width="7.1" height="17.13" fill="#c8a67a"/><rect x="163.21" y="266.29" width="7.1" height="17.13" fill="#737d88"/><rect x="163.21" y="249.51" width="7.1" height="17.13" fill="#f28c7a"/><rect x="163.21" y="232.73" width="7.1" height="17.13" fill="#f7a233"/><rect x="173.15" y="316.62" width="7.1" height="16.98" fill="#704fd4"/><rect x="173.15" y="283.07" width="7.1" height="33.91" fill="#ef7b30"/><rect x="173.15" y="266.29" width="7.1" height="17.13" fill="#4aa89e"/><rect x="173.15" y="249.51" width="7.1" height="17.13" fill="#f7a233"/><rect x="173.15" y="232.73" width="7.1" height="17.13" fill="#4abf91"/><rect x="183.09" y="249.51" width="7.1" height="84.09" fill="#704fd4"/><rect x="183.09" y="232.73" width="7.1" height="17.13" fill="#c8a67a"/><rect x="183.09" y="215.95" width="7.1" height="17.13" fill="#1f66f5"/><rect x="183.09" y="199.17" width="7.1" height="17.13" fill="#737d88"/><rect x="183.09" y="165.62" width="7.1" height="33.91" fill="#4aa89e"/><rect x="193.03" y="299.84" width="7.1" height="33.76" fill="#704fd4"/><rect x="193.03" y="283.07" width="7.1" height="17.13" fill="#737d88"/><rect x="193.03" y="266.29" width="7.1" height="17.13" fill="#4aa89e"/><rect x="202.96" y="316.62" width="7.1" height="16.98" fill="#4abf91"/><rect x="202.96" y="283.07" width="7.1" height="33.91" fill="#704fd4"/><rect x="202.96" y="249.51" width="7.1" height="33.91" fill="#c8a67a"/><rect x="202.96" y="232.73" width="7.1" height="17.13" fill="#45c1ea"/><rect x="202.96" y="215.95" width="7.1" height="17.13" fill="#4aa89e"/><rect x="202.96" y="182.40" width="7.1" height="33.91" fill="#f7a233"/><rect x="212.90" y="316.62" width="7.1" height="16.98" fill="#4abf91"/><rect x="212.90" y="283.07" width="7.1" height="33.91" fill="#704fd4"/><rect x="212.90" y="249.51" width="7.1" height="33.91" fill="#c8a67a"/><rect x="212.90" y="215.95" width="7.1" height="33.91" fill="#1f66f5"/><rect x="212.90" y="199.17" width="7.1" height="17.13" fill="#ef7b30"/><rect x="212.90" y="182.40" width="7.1" height="17.13" fill="#737d88"/><rect x="212.90" y="165.62" width="7.1" height="17.13" fill="#f28c7a"/><rect x="212.90" y="132.06" width="7.1" height="33.91" fill="#4aa89e"/><rect x="222.84" y="316.62" width="7.1" height="16.98" fill="#4abf91"/><rect x="222.84" y="299.84" width="7.1" height="17.13" fill="#704fd4"/><rect x="222.84" y="266.29" width="7.1" height="33.91" fill="#c8a67a"/><rect x="222.84" y="249.51" width="7.1" height="17.13" fill="#f28c7a"/><rect x="222.84" y="215.95" width="7.1" height="33.91" fill="#4aa89e"/><rect x="232.78" y="299.84" width="7.1" height="33.76" fill="#4abf91"/><rect x="232.78" y="283.07" width="7.1" height="17.13" fill="#704fd4"/><rect x="232.78" y="266.29" width="7.1" height="17.13" fill="#1f66f5"/><rect x="232.78" y="249.51" width="7.1" height="17.13" fill="#ef7b30"/><rect x="232.78" y="215.95" width="7.1" height="33.91" fill="#45c1ea"/><rect x="232.78" y="199.17" width="7.1" height="17.13" fill="#f7a233"/><rect x="232.78" y="182.40" width="7.1" height="17.13" fill="#4abf91"/><rect x="242.71" y="316.62" width="7.1" height="16.98" fill="#c8a67a"/><rect x="242.71" y="283.07" width="7.1" height="33.91" fill="#45c1ea"/><rect x="242.71" y="266.29" width="7.1" height="17.13" fill="#737d88"/><rect x="242.71" y="249.51" width="7.1" height="17.13" fill="#f28c7a"/><rect x="242.71" y="232.73" width="7.1" height="17.13" fill="#4abf91"/><rect x="252.65" y="283.07" width="7.1" height="50.53" fill="#4abf91"/><rect x="252.65" y="266.29" width="7.1" height="17.13" fill="#704fd4"/><rect x="252.65" y="249.51" width="7.1" height="17.13" fill="#ef7b30"/><rect x="252.65" y="215.95" width="7.1" height="33.91" fill="#45c1ea"/><rect x="252.65" y="182.40" width="7.1" height="33.91" fill="#737d88"/><rect x="252.65" y="165.62" width="7.1" height="17.13" fill="#f28c7a"/><rect x="252.65" y="132.06" width="7.1" height="33.91" fill="#4aa89e"/><rect x="252.65" y="115.28" width="7.1" height="17.13" fill="#4abf91"/><rect x="262.59" y="283.07" width="7.1" height="50.53" fill="#704fd4"/><rect x="262.59" y="232.73" width="7.1" height="50.68" fill="#c8a67a"/><rect x="262.59" y="199.17" width="7.1" height="33.91" fill="#ef7b30"/><rect x="262.59" y="182.40" width="7.1" height="17.13" fill="#45c1ea"/><rect x="262.59" y="165.62" width="7.1" height="17.13" fill="#f28c7a"/><rect x="262.59" y="148.84" width="7.1" height="17.13" fill="#4aa89e"/><rect x="262.59" y="132.06" width="7.1" height="17.13" fill="#4abf91"/><rect x="272.52" y="283.07" width="7.1" height="50.53" fill="#704fd4"/><rect x="272.52" y="266.29" width="7.1" height="17.13" fill="#ef7b30"/><rect x="272.52" y="249.51" width="7.1" height="17.13" fill="#737d88"/><rect x="272.52" y="215.95" width="7.1" height="33.91" fill="#4aa89e"/><rect x="272.52" y="199.17" width="7.1" height="17.13" fill="#4abf91"/><rect x="282.46" y="299.84" width="7.1" height="33.76" fill="#4abf91"/><rect x="282.46" y="283.07" width="7.1" height="17.13" fill="#c8a67a"/><rect x="282.46" y="266.29" width="7.1" height="17.13" fill="#ef7b30"/><rect x="282.46" y="249.51" width="7.1" height="17.13" fill="#45c1ea"/><rect x="292.40" y="299.84" width="7.1" height="33.76" fill="#4abf91"/><rect x="292.40" y="283.07" width="7.1" height="17.13" fill="#704fd4"/><rect x="292.40" y="266.29" width="7.1" height="17.13" fill="#1f66f5"/><rect x="292.40" y="232.73" width="7.1" height="33.91" fill="#ef7b30"/><rect x="292.40" y="215.95" width="7.1" height="17.13" fill="#4aa89e"/><rect x="302.34" y="316.62" width="7.1" height="16.98" fill="#4abf91"/><rect x="302.34" y="299.84" width="7.1" height="17.13" fill="#704fd4"/><rect x="302.34" y="283.07" width="7.1" height="17.13" fill="#c8a67a"/><rect x="302.34" y="266.29" width="7.1" height="17.13" fill="#45c1ea"/><rect x="302.34" y="249.51" width="7.1" height="17.13" fill="#f28c7a"/><rect x="302.34" y="199.17" width="7.1" height="50.68" fill="#4abf91"/><rect x="312.27" y="316.62" width="7.1" height="16.98" fill="#4abf91"/><rect x="312.27" y="283.07" width="7.1" height="33.91" fill="#704fd4"/><rect x="312.27" y="266.29" width="7.1" height="17.13" fill="#c8a67a"/><rect x="312.27" y="249.51" width="7.1" height="17.13" fill="#ef7b30"/><rect x="312.27" y="215.95" width="7.1" height="33.91" fill="#737d88"/><rect x="312.27" y="199.17" width="7.1" height="17.13" fill="#4aa89e"/><rect x="312.27" y="182.40" width="7.1" height="17.13" fill="#4abf91"/><rect x="322.21" y="316.62" width="7.1" height="16.98" fill="#4abf91"/><rect x="322.21" y="299.84" width="7.1" height="17.13" fill="#704fd4"/><rect x="322.21" y="283.07" width="7.1" height="17.13" fill="#ef7b30"/><rect x="322.21" y="266.29" width="7.1" height="17.13" fill="#737d88"/><rect x="322.21" y="249.51" width="7.1" height="17.13" fill="#f28c7a"/><rect x="322.21" y="232.73" width="7.1" height="17.13" fill="#4aa89e"/><rect x="332.15" y="283.07" width="7.1" height="50.53" fill="#704fd4"/><rect x="332.15" y="232.73" width="7.1" height="50.68" fill="#4aa89e"/><rect x="332.15" y="215.95" width="7.1" height="17.13" fill="#4abf91"/><rect x="342.09" y="316.62" width="7.1" height="16.98" fill="#4abf91"/><rect x="342.09" y="299.84" width="7.1" height="17.13" fill="#704fd4"/><rect x="342.09" y="283.07" width="7.1" height="17.13" fill="#45c1ea"/><rect x="352.02" y="283.07" width="7.1" height="50.53" fill="#4abf91"/><rect x="352.02" y="249.51" width="7.1" height="33.91" fill="#704fd4"/><rect x="352.02" y="232.73" width="7.1" height="17.13" fill="#c8a67a"/><rect x="352.02" y="215.95" width="7.1" height="17.13" fill="#45c1ea"/><rect x="352.02" y="199.17" width="7.1" height="17.13" fill="#737d88"/><rect x="361.96" y="299.84" width="7.1" height="33.76" fill="#4abf91"/><rect x="361.96" y="283.07" width="7.1" height="17.13" fill="#c8a67a"/><rect x="361.96" y="249.51" width="7.1" height="33.91" fill="#f28c7a"/><rect x="361.96" y="232.73" width="7.1" height="17.13" fill="#4aa89e"/><rect x="371.90" y="299.84" width="7.1" height="33.76" fill="#4abf91"/><rect x="371.90" y="266.29" width="7.1" height="33.91" fill="#704fd4"/><rect x="371.90" y="249.51" width="7.1" height="17.13" fill="#c8a67a"/><rect x="371.90" y="232.73" width="7.1" height="17.13" fill="#737d88"/><rect x="371.90" y="199.17" width="7.1" height="33.91" fill="#f28c7a"/><rect x="371.90" y="182.40" width="7.1" height="17.13" fill="#4aa89e"/><rect x="381.84" y="316.62" width="7.1" height="16.98" fill="#4abf91"/><rect x="381.84" y="299.84" width="7.1" height="17.13" fill="#c8a67a"/><rect x="381.84" y="283.07" width="7.1" height="17.13" fill="#ef7b30"/><rect x="381.84" y="266.29" width="7.1" height="17.13" fill="#737d88"/><rect x="381.84" y="249.51" width="7.1" height="17.13" fill="#f28c7a"/><rect x="381.84" y="232.73" width="7.1" height="17.13" fill="#4aa89e"/><rect x="391.77" y="299.84" width="7.1" height="33.76" fill="#704fd4"/><rect x="391.77" y="283.07" width="7.1" height="17.13" fill="#ef7b30"/><rect x="391.77" y="266.29" width="7.1" height="17.13" fill="#4abf91"/><rect x="401.71" y="299.84" width="7.1" height="33.76" fill="#4abf91"/><rect x="401.71" y="283.07" width="7.1" height="17.13" fill="#704fd4"/><rect x="401.71" y="249.51" width="7.1" height="33.91" fill="#c8a67a"/><rect x="401.71" y="232.73" width="7.1" height="17.13" fill="#737d88"/><rect x="401.71" y="215.95" width="7.1" height="17.13" fill="#f28c7a"/><rect x="401.71" y="199.17" width="7.1" height="17.13" fill="#4aa89e"/><rect x="411.65" y="316.62" width="7.1" height="16.98" fill="#4abf91"/><rect x="411.65" y="283.07" width="7.1" height="33.91" fill="#ef7b30"/><rect x="411.65" y="266.29" width="7.1" height="17.13" fill="#f28c7a"/><rect x="421.59" y="316.62" width="7.1" height="16.98" fill="#4abf91"/><rect x="421.59" y="299.84" width="7.1" height="17.13" fill="#ef7b30"/><rect x="421.59" y="283.07" width="7.1" height="17.13" fill="#f28c7a"/><rect x="431.52" y="299.84" width="7.1" height="33.76" fill="#4abf91"/><rect x="431.52" y="266.29" width="7.1" height="33.91" fill="#704fd4"/><rect x="431.52" y="249.51" width="7.1" height="17.13" fill="#45c1ea"/><rect x="431.52" y="232.73" width="7.1" height="17.13" fill="#f28c7a"/><rect x="431.52" y="215.95" width="7.1" height="17.13" fill="#4aa89e"/><rect x="441.46" y="299.84" width="7.1" height="33.76" fill="#4abf91"/><rect x="441.46" y="266.29" width="7.1" height="33.91" fill="#704fd4"/><rect x="441.46" y="249.51" width="7.1" height="17.13" fill="#1f66f5"/><rect x="441.46" y="232.73" width="7.1" height="17.13" fill="#ef7b30"/><rect x="441.46" y="215.95" width="7.1" height="17.13" fill="#737d88"/><rect x="441.46" y="199.17" width="7.1" height="17.13" fill="#f28c7a"/><rect x="451.40" y="266.29" width="7.1" height="67.31" fill="#704fd4"/><rect x="451.40" y="249.51" width="7.1" height="17.13" fill="#f28c7a"/><rect x="461.34" y="316.62" width="7.1" height="16.98" fill="#4abf91"/><rect x="461.34" y="299.84" width="7.1" height="17.13" fill="#ef7b30"/><rect x="461.34" y="283.07" width="7.1" height="17.13" fill="#f28c7a"/><rect x="471.27" y="283.07" width="7.1" height="50.53" fill="#704fd4"/><rect x="471.27" y="266.29" width="7.1" height="17.13" fill="#c8a67a"/><rect x="471.27" y="232.73" width="7.1" height="33.91" fill="#45c1ea"/><rect x="471.27" y="215.95" width="7.1" height="17.13" fill="#737d88"/><rect x="471.27" y="199.17" width="7.1" height="17.13" fill="#f28c7a"/><rect x="471.27" y="165.62" width="7.1" height="33.91" fill="#4aa89e"/><rect x="481.21" y="316.62" width="7.1" height="16.98" fill="#4abf91"/><rect x="481.21" y="283.07" width="7.1" height="33.91" fill="#704fd4"/><rect x="481.21" y="249.51" width="7.1" height="33.91" fill="#45c1ea"/><rect x="481.21" y="232.73" width="7.1" height="17.13" fill="#737d88"/><rect x="481.21" y="215.95" width="7.1" height="17.13" fill="#f28c7a"/><rect x="491.15" y="299.84" width="7.1" height="33.76" fill="#4abf91"/><rect x="491.15" y="232.73" width="7.1" height="67.46" fill="#704fd4"/><rect x="491.15" y="199.17" width="7.1" height="33.91" fill="#ef7b30"/><rect x="491.15" y="148.84" width="7.1" height="50.68" fill="#45c1ea"/><rect x="491.15" y="132.06" width="7.1" height="17.13" fill="#f28c7a"/><rect x="491.15" y="115.28" width="7.1" height="17.13" fill="#4abf91"/><rect x="501.09" y="316.62" width="7.1" height="16.98" fill="#704fd4"/><rect x="501.09" y="299.84" width="7.1" height="17.13" fill="#1f66f5"/><rect x="501.09" y="283.07" width="7.1" height="17.13" fill="#ef7b30"/><rect x="501.09" y="266.29" width="7.1" height="17.13" fill="#737d88"/><rect x="501.09" y="249.51" width="7.1" height="17.13" fill="#4aa89e"/><rect x="501.09" y="232.73" width="7.1" height="17.13" fill="#f7a233"/><rect x="511.02" y="299.84" width="7.1" height="33.76" fill="#4abf91"/><rect x="511.02" y="283.07" width="7.1" height="17.13" fill="#ef7b30"/><rect x="511.02" y="249.51" width="7.1" height="33.91" fill="#4aa89e"/><rect x="511.02" y="232.73" width="7.1" height="17.13" fill="#f7a233"/><rect x="520.96" y="316.62" width="7.1" height="16.98" fill="#4abf91"/><rect x="520.96" y="299.84" width="7.1" height="17.13" fill="#704fd4"/><rect x="520.96" y="283.07" width="7.1" height="17.13" fill="#c8a67a"/><rect x="520.96" y="266.29" width="7.1" height="17.13" fill="#ef7b30"/><rect x="520.96" y="249.51" width="7.1" height="17.13" fill="#45c1ea"/></svg><div style="position:absolute;left:13.00px;top:370.30px;width:12px;height:1.5px;background:#4abf91"></div><div class="t" style="left:35.40px;top:364.47px;font-size:11px;color:#4abf91;font-weight:400;">DELETE /api/cart</div><div style="position:absolute;left:148.50px;top:370.30px;width:12px;height:1.5px;background:#f7a233"></div><div class="t" style="left:170.90px;top:364.47px;font-size:11px;color:#f7a233;font-weight:400;">GET /api/cart</div><div style="position:absolute;left:264.20px;top:370.30px;width:12px;height:1.5px;background:#4aa89e"></div><div class="t" style="left:286.60px;top:364.47px;font-size:11px;color:#4aa89e;font-weight:400;">GET /api/users</div><div style="position:absolute;left:386.50px;top:370.30px;width:12px;height:1.5px;background:#f28c7a"></div><div class="t" style="left:408.90px;top:364.47px;font-size:11px;color:#f28c7a;font-weight:400;">POST /api/users</div><div class="t" style="left:13.00px;top:381.57px;font-size:11px;color:#8b8c90;font-weight:400;text-decoration:underline;text-underline-offset:1.5px">+7 more</div><div style="position:absolute;left:535.20px;top:402px;width:5px;height:5px;border-right:2px solid #c1c2c5;border-bottom:2px solid #c1c2c5;box-sizing:border-box"></div></div><div class="panel" style="left:242px;top:549px;width:543px;height:410px"><div class="t" style="left:17.60px;top:14.04px;font-size:13px;color:#98999d;font-weight:400;">HTTP status codes</div><svg style="position:absolute;left:488.00px;top:18.85px;" width="16" height="16" viewBox="0 0 24 24" fill="none" stroke="#c1c2c5" stroke-width="2" stroke-linecap="round" stroke-linejoin="round"><path d="M4 19l16 0"/><path d="M4 15l4 -6l4 2l4 -5l4 4"/></svg><svg style="position:absolute;left:508.20px;top:19.10px;" width="16" height="16" viewBox="0 0 24 24" fill="none" stroke="#5ad69a" stroke-width="2" stroke-linecap="round" stroke-linejoin="round"><path d="M3 13a1 1 0 0 1 1 -1h4a1 1 0 0 1 1 1v6a1 1 0 0 1 -1 1h-4a1 1 0 0 1 -1 -1z"/><path d="M15 9a1 1 0 0 1 1 -1h4a1 1 0 0 1 1 1v10a1 1 0 0 1 -1 1h-4a1 1 0 0 1 -1 -1z"/><path d="M9 5a1 1 0 0 1 1 -1h4a1 1 0 0 1 1 1v14a1 1 0 0 1 -1 1h-4a1 1 0 0 1 -1 -1z"/><path d="M4 20h14"/></svg><svg class="ch" width="543" height="410" viewBox="0 0 543 410"><path d="M53.0,64.95V349.8H530.0" fill="none" stroke="#646464" stroke-width="1"/><path d="M47.0,349.80H53.0" stroke="#646464" stroke-width="1"/><text x="45.1" y="353.40" text-anchor="end" class="ax">0</text><path d="M47.0,278.59H53.0" stroke="#646464" stroke-width="1"/><text x="45.1" y="282.19" text-anchor="end" class="ax">4</text><path d="M47.0,207.38H53.0" stroke="#646464" stroke-width="1"/><text x="45.1" y="210.97" text-anchor="end" class="ax">8</text><path d="M47.0,136.16H53.0" stroke="#646464" stroke-width="1"/><text x="45.1" y="139.76" text-anchor="end" class="ax">12</text><path d="M47.0,64.95H53.0" stroke="#646464" stroke-width="1"/><text x="45.1" y="72.25" text-anchor="end" class="ax">16</text><path d="M57.97,349.8V355.8" stroke="#646464" stroke-width="1"/><path d="M256.72,349.8V355.8" stroke="#646464" stroke-width="1"/><path d="M525.03,349.8V355.8" stroke="#646464" stroke-width="1"/><text x="8.0" y="366.00" class="ax">Oct 26 1:00:00 PM</text><text x="256.72" y="366.00" text-anchor="middle" class="ax">11:00:00 PM</text><text x="535.3" y="366.00" text-anchor="end" class="ax">12:30:00 PM</text><rect x="53.90" y="189.57" width="7.1" height="160.83" fill="#4abf91"/><rect x="53.90" y="171.77" width="7.1" height="18.15" fill="#c8a67a"/><rect x="63.84" y="278.59" width="7.1" height="71.81" fill="#4abf91"/><rect x="73.78" y="207.38" width="7.1" height="143.03" fill="#4abf91"/><rect x="83.71" y="189.57" width="7.1" height="160.83" fill="#4abf91"/><rect x="93.65" y="260.78" width="7.1" height="89.62" fill="#4abf91"/><rect x="93.65" y="242.98" width="7.1" height="18.15" fill="#45c1ea"/><rect x="103.59" y="242.98" width="7.1" height="107.42" fill="#4abf91"/><rect x="113.53" y="171.77" width="7.1" height="178.63" fill="#4abf91"/><rect x="123.46" y="242.98" width="7.1" height="107.42" fill="#4abf91"/><rect x="123.46" y="225.18" width="7.1" height="18.15" fill="#704fd4"/><rect x="133.40" y="207.38" width="7.1" height="143.03" fill="#4abf91"/><rect x="143.34" y="207.38" width="7.1" height="143.03" fill="#4abf91"/><rect x="143.34" y="189.57" width="7.1" height="18.15" fill="#c8a67a"/><rect x="153.28" y="225.18" width="7.1" height="125.22" fill="#4abf91"/><rect x="153.28" y="207.38" width="7.1" height="18.15" fill="#c8a67a"/><rect x="163.21" y="242.98" width="7.1" height="107.42" fill="#4abf91"/><rect x="173.15" y="242.98" width="7.1" height="107.42" fill="#4abf91"/><rect x="183.09" y="171.77" width="7.1" height="178.63" fill="#4abf91"/><rect x="193.03" y="278.59" width="7.1" height="71.81" fill="#4abf91"/><rect x="202.96" y="225.18" width="7.1" height="125.22" fill="#4abf91"/><rect x="202.96" y="207.38" width="7.1" height="18.15" fill="#c8a67a"/><rect x="202.96" y="189.57" width="7.1" height="18.15" fill="#ef7b30"/><rect x="212.90" y="153.97" width="7.1" height="196.43" fill="#4abf91"/><rect x="212.90" y="136.16" width="7.1" height="18.15" fill="#c8a67a"/><rect x="222.84" y="242.98" width="7.1" height="107.42" fill="#4abf91"/><rect x="222.84" y="225.18" width="7.1" height="18.15" fill="#ef7b30"/><rect x="232.78" y="189.57" width="7.1" height="160.83" fill="#4abf91"/><rect x="242.71" y="242.98" width="7.1" height="107.42" fill="#4abf91"/><rect x="252.65" y="153.97" width="7.1" height="196.43" fill="#4abf91"/><rect x="252.65" y="136.16" width="7.1" height="18.15" fill="#c8a67a"/><rect x="252.65" y="118.36" width="7.1" height="18.15" fill="#1f66f5"/><rect x="262.59" y="136.16" width="7.1" height="214.24" fill="#4abf91"/><rect x="272.52" y="207.38" width="7.1" height="143.03" fill="#4abf91"/><rect x="282.46" y="278.59" width="7.1" height="71.81" fill="#4abf91"/><rect x="282.46" y="260.78" width="7.1" height="18.15" fill="#45c1ea"/><rect x="292.40" y="225.18" width="7.1" height="125.22" fill="#4abf91"/><rect x="302.34" y="207.38" width="7.1" height="143.03" fill="#4abf91"/><rect x="312.27" y="207.38" width="7.1" height="143.03" fill="#4abf91"/><rect x="312.27" y="189.57" width="7.1" height="18.15" fill="#ef7b30"/><rect x="322.21" y="242.98" width="7.1" height="107.42" fill="#4abf91"/><rect x="332.15" y="260.78" width="7.1" height="89.62" fill="#4abf91"/><rect x="332.15" y="242.98" width="7.1" height="18.15" fill="#c8a67a"/><rect x="332.15" y="225.18" width="7.1" height="18.15" fill="#ef7b30"/><rect x="342.09" y="296.39" width="7.1" height="54.01" fill="#4abf91"/><rect x="352.02" y="207.38" width="7.1" height="143.03" fill="#4abf91"/><rect x="361.96" y="242.98" width="7.1" height="107.42" fill="#4abf91"/><rect x="371.90" y="189.57" width="7.1" height="160.83" fill="#4abf91"/><rect x="381.84" y="242.98" width="7.1" height="107.42" fill="#4abf91"/><rect x="391.77" y="278.59" width="7.1" height="71.81" fill="#4abf91"/><rect x="401.71" y="207.38" width="7.1" height="143.03" fill="#4abf91"/><rect x="411.65" y="278.59" width="7.1" height="71.81" fill="#4abf91"/><rect x="421.59" y="296.39" width="7.1" height="54.01" fill="#4abf91"/><rect x="431.52" y="242.98" width="7.1" height="107.42" fill="#4abf91"/><rect x="431.52" y="225.18" width="7.1" height="18.15" fill="#704fd4"/><rect x="441.46" y="207.38" width="7.1" height="143.03" fill="#4abf91"/><rect x="451.40" y="260.78" width="7.1" height="89.62" fill="#4abf91"/><rect x="461.34" y="296.39" width="7.1" height="54.01" fill="#4abf91"/><rect x="471.27" y="171.77" width="7.1" height="178.63" fill="#4abf91"/><rect x="481.21" y="242.98" width="7.1" height="107.42" fill="#4abf91"/><rect x="481.21" y="225.18" width="7.1" height="18.15" fill="#45c1ea"/><rect x="491.15" y="118.36" width="7.1" height="232.04" fill="#4abf91"/><rect x="501.09" y="242.98" width="7.1" height="107.42" fill="#4abf91"/><rect x="511.02" y="242.98" width="7.1" height="107.42" fill="#4abf91"/><rect x="520.96" y="278.59" width="7.1" height="71.81" fill="#4abf91"/><rect x="520.96" y="260.78" width="7.1" height="18.15" fill="#45c1ea"/></svg><div style="position:absolute;left:13.00px;top:387.40px;width:12px;height:1.5px;background:#45c1ea"></div><div class="t" style="left:35.40px;top:381.57px;font-size:11px;color:#45c1ea;font-weight:400;">503</div><div style="position:absolute;left:62.70px;top:387.40px;width:12px;height:1.5px;background:#ef7b30"></div><div class="t" style="left:85.10px;top:381.57px;font-size:11px;color:#ef7b30;font-weight:400;">500</div><div style="position:absolute;left:112.40px;top:387.40px;width:12px;height:1.5px;background:#1f66f5"></div><div class="t" style="left:134.80px;top:381.57px;font-size:11px;color:#1f66f5;font-weight:400;">422</div><div style="position:absolute;left:162.10px;top:387.40px;width:12px;height:1.5px;background:#c8a67a"></div><div class="t" style="left:184.50px;top:381.57px;font-size:11px;color:#c8a67a;font-weight:400;">404</div><div class="t" style="left:212.20px;top:381.57px;font-size:11px;color:#8b8c90;font-weight:400;text-decoration:underline;text-underline-offset:1.5px">+2 more</div><div style="position:absolute;left:535.00px;top:402px;width:5px;height:5px;border-right:2px solid #c1c2c5;border-bottom:2px solid #c1c2c5;box-sizing:border-box"></div></div><div class="panel" style="left:795px;top:549px;width:543px;height:410px"><div class="t" style="left:17.60px;top:14.04px;font-size:13px;color:#98999d;font-weight:400;">Requests by HTTP method</div><svg style="position:absolute;left:488.00px;top:18.85px;" width="16" height="16" viewBox="0 0 24 24" fill="none" stroke="#5ad69a" stroke-width="2" stroke-linecap="round" stroke-linejoin="round"><path d="M4 19l16 0"/><path d="M4 15l4 -6l4 2l4 -5l4 4"/></svg><svg style="position:absolute;left:508.20px;top:19.10px;" width="16" height="16" viewBox="0 0 24 24" fill="none" stroke="#c1c2c5" stroke-width="2" stroke-linecap="round" stroke-linejoin="round"><path d="M3 13a1 1 0 0 1 1 -1h4a1 1 0 0 1 1 1v6a1 1 0 0 1 -1 1h-4a1 1 0 0 1 -1 -1z"/><path d="M15 9a1 1 0 0 1 1 -1h4a1 1 0 0 1 1 1v10a1 1 0 0 1 -1 1h-4a1 1 0 0 1 -1 -1z"/><path d="M9 5a1 1 0 0 1 1 -1h4a1 1 0 0 1 1 1v14a1 1 0 0 1 -1 1h-4a1 1 0 0 1 -1 -1z"/><path d="M4 20h14"/></svg><svg class="ch" width="543" height="410" viewBox="0 0 543 410"><path d="M53.0,64.95V349.8H530.0" fill="none" stroke="#646464" stroke-width="1"/><path d="M47.0,349.80H53.0" stroke="#646464" stroke-width="1"/><text x="45.1" y="353.40" text-anchor="end" class="ax">0</text><path d="M47.0,278.59H53.0" stroke="#646464" stroke-width="1"/><text x="45.1" y="282.19" text-anchor="end" class="ax">3</text><path d="M47.0,207.38H53.0" stroke="#646464" stroke-width="1"/><text x="45.1" y="210.97" text-anchor="end" class="ax">6</text><path d="M47.0,136.16H53.0" stroke="#646464" stroke-width="1"/><text x="45.1" y="139.76" text-anchor="end" class="ax">9</text><path d="M47.0,64.95H53.0" stroke="#646464" stroke-width="1"/><text x="45.1" y="72.25" text-anchor="end" class="ax">12</text><path d="M53.00,349.8V355.8" stroke="#646464" stroke-width="1"/><path d="M266.13,349.8V355.8" stroke="#646464" stroke-width="1"/><path d="M530.00,349.8V355.8" stroke="#646464" stroke-width="1"/><text x="8.0" y="366.00" class="ax">Oct 26 1:00:00 PM</text><text x="266.13" y="366.00" text-anchor="middle" class="ax">11:30:00 PM</text><text x="535.3" y="366.00" text-anchor="end" class="ax">12:30:00 PM</text><defs><linearGradient id="g4_0" x1="0" y1="0" x2="0" y2="1"><stop offset="0" stop-color="#c8a67a" stop-opacity="0.13"/><stop offset="0.14" stop-color="#c8a67a" stop-opacity="0"/></linearGradient></defs><path d="M53.00,349.80C56.38,349.80,59.77,349.80,63.15,349.80C66.53,349.80,69.91,349.80,73.30,349.80C76.68,349.80,80.06,326.06,83.45,326.06C86.83,326.06,90.21,349.80,93.60,349.80C96.98,349.80,100.36,349.80,103.74,349.80C107.13,349.80,110.51,349.80,113.89,349.80C117.28,349.80,120.66,349.80,124.04,349.80C127.43,349.80,130.81,349.80,134.19,349.80C137.57,349.80,140.96,326.06,144.34,326.06C147.72,326.06,151.11,349.80,154.49,349.80C157.87,349.80,161.26,349.80,164.64,349.80C168.02,349.80,171.40,326.06,174.79,326.06C178.17,326.06,181.55,349.80,184.94,349.80C188.32,349.80,191.70,349.80,195.09,349.80C198.47,349.80,201.85,349.80,205.23,349.80C208.62,349.80,212.00,349.80,215.38,349.80C218.77,349.80,222.15,349.80,225.53,349.80C228.91,349.80,232.30,326.06,235.68,326.06C239.06,326.06,242.45,326.06,245.83,326.06C249.21,326.06,252.60,326.06,255.98,326.06C259.36,326.06,262.74,326.06,266.13,326.06C269.51,326.06,272.89,326.06,276.28,326.06C279.66,326.06,283.04,349.80,286.43,349.80C289.81,349.80,293.19,349.80,296.57,349.80C299.96,349.80,303.34,278.59,306.72,278.59C310.11,278.59,313.49,314.19,316.87,326.06C320.26,337.93,323.64,349.80,327.02,349.80C330.40,349.80,333.79,326.06,337.17,326.06C340.55,326.06,343.94,349.80,347.32,349.80C350.70,349.80,354.09,349.80,357.47,349.80C360.85,349.80,364.23,349.80,367.62,349.80C371.00,349.80,374.38,349.80,377.77,349.80C381.15,349.80,384.53,349.80,387.91,349.80C391.30,349.80,394.68,326.06,398.06,326.06C401.45,326.06,404.83,349.80,408.21,349.80C411.60,349.80,414.98,349.80,418.36,349.80C421.74,349.80,425.13,349.80,428.51,349.80C431.89,349.80,435.28,349.80,438.66,349.80C442.04,349.80,445.43,349.80,448.81,349.80C452.19,349.80,455.57,349.80,458.96,349.80C462.34,349.80,465.72,349.80,469.11,349.80C472.49,349.80,475.87,349.80,479.26,349.80C482.64,349.80,486.02,349.80,489.40,349.80C492.79,349.80,496.17,326.06,499.55,326.06C502.94,326.06,506.32,349.80,509.70,349.80C513.09,349.80,516.47,349.80,519.85,349.80C523.23,349.80,526.62,349.80,530.00,349.80L530.00,349.8L53.00,349.8Z" fill="url(#g4_0)" stroke="none"/><path d="M53.00,349.80C56.38,349.80,59.77,349.80,63.15,349.80C66.53,349.80,69.91,349.80,73.30,349.80C76.68,349.80,80.06,326.06,83.45,326.06C86.83,326.06,90.21,349.80,93.60,349.80C96.98,349.80,100.36,349.80,103.74,349.80C107.13,349.80,110.51,349.80,113.89,349.80C117.28,349.80,120.66,349.80,124.04,349.80C127.43,349.80,130.81,349.80,134.19,349.80C137.57,349.80,140.96,326.06,144.34,326.06C147.72,326.06,151.11,349.80,154.49,349.80C157.87,349.80,161.26,349.80,164.64,349.80C168.02,349.80,171.40,326.06,174.79,326.06C178.17,326.06,181.55,349.80,184.94,349.80C188.32,349.80,191.70,349.80,195.09,349.80C198.47,349.80,201.85,349.80,205.23,349.80C208.62,349.80,212.00,349.80,215.38,349.80C218.77,349.80,222.15,349.80,225.53,349.80C228.91,349.80,232.30,326.06,235.68,326.06C239.06,326.06,242.45,326.06,245.83,326.06C249.21,326.06,252.60,326.06,255.98,326.06C259.36,326.06,262.74,326.06,266.13,326.06C269.51,326.06,272.89,326.06,276.28,326.06C279.66,326.06,283.04,349.80,286.43,349.80C289.81,349.80,293.19,349.80,296.57,349.80C299.96,349.80,303.34,278.59,306.72,278.59C310.11,278.59,313.49,314.19,316.87,326.06C320.26,337.93,323.64,349.80,327.02,349.80C330.40,349.80,333.79,326.06,337.17,326.06C340.55,326.06,343.94,349.80,347.32,349.80C350.70,349.80,354.09,349.80,357.47,349.80C360.85,349.80,364.23,349.80,367.62,349.80C371.00,349.80,374.38,349.80,377.77,349.80C381.15,349.80,384.53,349.80,387.91,349.80C391.30,349.80,394.68,326.06,398.06,326.06C401.45,326.06,404.83,349.80,408.21,349.80C411.60,349.80,414.98,349.80,418.36,349.80C421.74,349.80,425.13,349.80,428.51,349.80C431.89,349.80,435.28,349.80,438.66,349.80C442.04,349.80,445.43,349.80,448.81,349.80C452.19,349.80,455.57,349.80,458.96,349.80C462.34,349.80,465.72,349.80,469.11,349.80C472.49,349.80,475.87,349.80,479.26,349.80C482.64,349.80,486.02,349.80,489.40,349.80C492.79,349.80,496.17,326.06,499.55,326.06C502.94,326.06,506.32,349.80,509.70,349.80C513.09,349.80,516.47,349.80,519.85,349.80C523.23,349.80,526.62,349.80,530.00,349.80" fill="none" stroke="#c8a67a" stroke-width="1"/><defs><linearGradient id="g4_1" x1="0" y1="0" x2="0" y2="1"><stop offset="0" stop-color="#704fd4" stop-opacity="0.13"/><stop offset="0.14" stop-color="#704fd4" stop-opacity="0"/></linearGradient></defs><path d="M53.00,278.59C56.38,302.32,59.77,326.06,63.15,326.06C66.53,326.06,69.91,326.06,73.30,326.06C76.68,326.06,80.06,314.19,83.45,302.32C86.83,290.46,90.21,254.85,93.60,254.85C96.98,254.85,100.36,278.59,103.74,278.59C107.13,278.59,110.51,278.59,113.89,278.59C117.28,278.59,120.66,326.06,124.04,326.06C127.43,326.06,130.81,302.32,134.19,302.32C137.57,302.32,140.96,326.06,144.34,326.06C147.72,326.06,151.11,278.59,154.49,278.59C157.87,278.59,161.26,290.46,164.64,302.32C168.02,314.19,171.40,349.80,174.79,349.80C178.17,349.80,181.55,302.32,184.94,302.32C188.32,302.32,191.70,349.80,195.09,349.80C198.47,349.80,201.85,298.37,205.23,278.59C208.62,258.81,212.00,231.11,215.38,231.11C218.77,231.11,222.15,278.59,225.53,278.59C228.91,278.59,232.30,278.59,235.68,278.59C239.06,278.59,242.45,254.85,245.83,254.85C249.21,254.85,252.60,278.59,255.98,278.59C259.36,278.59,262.74,231.11,266.13,231.11C269.51,231.11,272.89,349.80,276.28,349.80C279.66,349.80,283.04,302.32,286.43,302.32C289.81,302.32,293.19,326.06,296.57,326.06C299.96,326.06,303.34,278.59,306.72,278.59C310.11,278.59,313.49,326.06,316.87,326.06C320.26,326.06,323.64,326.06,327.02,326.06C330.40,326.06,333.79,349.80,337.17,349.80C340.55,349.80,343.94,333.98,347.32,326.06C350.70,318.15,354.09,310.24,357.47,302.32C360.85,294.41,364.23,278.59,367.62,278.59C371.00,278.59,374.38,278.59,377.77,278.59C381.15,278.59,384.53,290.46,387.91,302.32C391.30,314.19,394.68,349.80,398.06,349.80C401.45,349.80,404.83,278.59,408.21,278.59C411.60,278.59,414.98,326.06,418.36,326.06C421.74,326.06,425.13,326.06,428.51,326.06C431.89,326.06,435.28,302.32,438.66,302.32C442.04,302.32,445.43,302.32,448.81,302.32C452.19,302.32,455.57,326.06,458.96,326.06C462.34,326.06,465.72,326.06,469.11,326.06C472.49,326.06,475.87,254.85,479.26,254.85C482.64,254.85,486.02,278.59,489.40,278.59C492.79,278.59,496.17,254.85,499.55,254.85C502.94,254.85,506.32,310.24,509.70,326.06C513.09,341.89,516.47,349.80,519.85,349.80C523.23,349.80,526.62,326.06,530.00,302.32L530.00,349.8L53.00,349.8Z" fill="url(#g4_1)" stroke="none"/><path d="M53.00,278.59C56.38,302.32,59.77,326.06,63.15,326.06C66.53,326.06,69.91,326.06,73.30,326.06C76.68,326.06,80.06,314.19,83.45,302.32C86.83,290.46,90.21,254.85,93.60,254.85C96.98,254.85,100.36,278.59,103.74,278.59C107.13,278.59,110.51,278.59,113.89,278.59C117.28,278.59,120.66,326.06,124.04,326.06C127.43,326.06,130.81,302.32,134.19,302.32C137.57,302.32,140.96,326.06,144.34,326.06C147.72,326.06,151.11,278.59,154.49,278.59C157.87,278.59,161.26,290.46,164.64,302.32C168.02,314.19,171.40,349.80,174.79,349.80C178.17,349.80,181.55,302.32,184.94,302.32C188.32,302.32,191.70,349.80,195.09,349.80C198.47,349.80,201.85,298.37,205.23,278.59C208.62,258.81,212.00,231.11,215.38,231.11C218.77,231.11,222.15,278.59,225.53,278.59C228.91,278.59,232.30,278.59,235.68,278.59C239.06,278.59,242.45,254.85,245.83,254.85C249.21,254.85,252.60,278.59,255.98,278.59C259.36,278.59,262.74,231.11,266.13,231.11C269.51,231.11,272.89,349.80,276.28,349.80C279.66,349.80,283.04,302.32,286.43,302.32C289.81,302.32,293.19,326.06,296.57,326.06C299.96,326.06,303.34,278.59,306.72,278.59C310.11,278.59,313.49,326.06,316.87,326.06C320.26,326.06,323.64,326.06,327.02,326.06C330.40,326.06,333.79,349.80,337.17,349.80C340.55,349.80,343.94,333.98,347.32,326.06C350.70,318.15,354.09,310.24,357.47,302.32C360.85,294.41,364.23,278.59,367.62,278.59C371.00,278.59,374.38,278.59,377.77,278.59C381.15,278.59,384.53,290.46,387.91,302.32C391.30,314.19,394.68,349.80,398.06,349.80C401.45,349.80,404.83,278.59,408.21,278.59C411.60,278.59,414.98,326.06,418.36,326.06C421.74,326.06,425.13,326.06,428.51,326.06C431.89,326.06,435.28,302.32,438.66,302.32C442.04,302.32,445.43,302.32,448.81,302.32C452.19,302.32,455.57,326.06,458.96,326.06C462.34,326.06,465.72,326.06,469.11,326.06C472.49,326.06,475.87,254.85,479.26,254.85C482.64,254.85,486.02,278.59,489.40,278.59C492.79,278.59,496.17,254.85,499.55,254.85C502.94,254.85,506.32,310.24,509.70,326.06C513.09,341.89,516.47,349.80,519.85,349.80C523.23,349.80,526.62,326.06,530.00,302.32" fill="none" stroke="#704fd4" stroke-width="1"/><defs><linearGradient id="g4_2" x1="0" y1="0" x2="0" y2="1"><stop offset="0" stop-color="#4abf91" stop-opacity="0.13"/><stop offset="0.14" stop-color="#4abf91" stop-opacity="0"/></linearGradient></defs><path d="M53.00,183.64C56.38,231.11,59.77,278.59,63.15,278.59C66.53,278.59,69.91,183.64,73.30,183.64C76.68,183.64,80.06,191.55,83.45,207.38C86.83,223.20,90.21,302.32,93.60,302.32C96.98,302.32,100.36,294.41,103.74,278.59C107.13,262.76,110.51,183.64,113.89,183.64C117.28,183.64,120.66,207.38,124.04,207.38C127.43,207.38,130.81,207.38,134.19,207.38C137.57,207.38,140.96,183.64,144.34,183.64C147.72,183.64,151.11,219.24,154.49,231.11C157.87,242.98,161.26,254.85,164.64,254.85C168.02,254.85,171.40,246.94,174.79,231.11C178.17,215.29,181.55,159.90,184.94,159.90C188.32,159.90,191.70,254.85,195.09,254.85C198.47,254.85,201.85,219.24,205.23,207.38C208.62,195.51,212.00,183.64,215.38,183.64C218.77,183.64,222.15,254.85,225.53,254.85C228.91,254.85,232.30,231.11,235.68,231.11C239.06,231.11,242.45,326.06,245.83,326.06C249.21,326.06,252.60,136.16,255.98,136.16C259.36,136.16,262.74,207.38,266.13,207.38C269.51,207.38,272.89,183.64,276.28,183.64C279.66,183.64,283.04,278.59,286.43,278.59C289.81,278.59,293.19,207.38,296.57,207.38C299.96,207.38,303.34,302.32,306.72,302.32C310.11,302.32,313.49,183.64,316.87,183.64C320.26,183.64,323.64,231.11,327.02,231.11C330.40,231.11,333.79,207.38,337.17,207.38C340.55,207.38,343.94,302.32,347.32,302.32C350.70,302.32,354.09,207.38,357.47,207.38C360.85,207.38,364.23,278.59,367.62,278.59C371.00,278.59,374.38,207.38,377.77,207.38C381.15,207.38,384.53,242.98,387.91,254.85C391.30,266.72,394.68,278.59,398.06,278.59C401.45,278.59,404.83,231.11,408.21,231.11C411.60,231.11,414.98,266.72,418.36,278.59C421.74,290.46,425.13,302.32,428.51,302.32C431.89,302.32,435.28,246.94,438.66,231.11C442.04,215.29,445.43,207.38,448.81,207.38C452.19,207.38,455.57,239.03,458.96,254.85C462.34,270.68,465.72,302.32,469.11,302.32C472.49,302.32,475.87,207.38,479.26,207.38C482.64,207.38,486.02,254.85,489.40,254.85C492.79,254.85,496.17,159.90,499.55,159.90C502.94,159.90,506.32,231.11,509.70,231.11C513.09,231.11,516.47,207.38,519.85,207.38C523.23,207.38,526.62,242.98,530.00,278.59L530.00,349.8L53.00,349.8Z" fill="url(#g4_2)" stroke="none"/><path d="M53.00,183.64C56.38,231.11,59.77,278.59,63.15,278.59C66.53,278.59,69.91,183.64,73.30,183.64C76.68,183.64,80.06,191.55,83.45,207.38C86.83,223.20,90.21,302.32,93.60,302.32C96.98,302.32,100.36,294.41,103.74,278.59C107.13,262.76,110.51,183.64,113.89,183.64C117.28,183.64,120.66,207.38,124.04,207.38C127.43,207.38,130.81,207.38,134.19,207.38C137.57,207.38,140.96,183.64,144.34,183.64C147.72,183.64,151.11,219.24,154.49,231.11C157.87,242.98,161.26,254.85,164.64,254.85C168.02,254.85,171.40,246.94,174.79,231.11C178.17,215.29,181.55,159.90,184.94,159.90C188.32,159.90,191.70,254.85,195.09,254.85C198.47,254.85,201.85,219.24,205.23,207.38C208.62,195.51,212.00,183.64,215.38,183.64C218.77,183.64,222.15,254.85,225.53,254.85C228.91,254.85,232.30,231.11,235.68,231.11C239.06,231.11,242.45,326.06,245.83,326.06C249.21,326.06,252.60,136.16,255.98,136.16C259.36,136.16,262.74,207.38,266.13,207.38C269.51,207.38,272.89,183.64,276.28,183.64C279.66,183.64,283.04,278.59,286.43,278.59C289.81,278.59,293.19,207.38,296.57,207.38C299.96,207.38,303.34,302.32,306.72,302.32C310.11,302.32,313.49,183.64,316.87,183.64C320.26,183.64,323.64,231.11,327.02,231.11C330.40,231.11,333.79,207.38,337.17,207.38C340.55,207.38,343.94,302.32,347.32,302.32C350.70,302.32,354.09,207.38,357.47,207.38C360.85,207.38,364.23,278.59,367.62,278.59C371.00,278.59,374.38,207.38,377.77,207.38C381.15,207.38,384.53,242.98,387.91,254.85C391.30,266.72,394.68,278.59,398.06,278.59C401.45,278.59,404.83,231.11,408.21,231.11C411.60,231.11,414.98,266.72,418.36,278.59C421.74,290.46,425.13,302.32,428.51,302.32C431.89,302.32,435.28,246.94,438.66,231.11C442.04,215.29,445.43,207.38,448.81,207.38C452.19,207.38,455.57,239.03,458.96,254.85C462.34,270.68,465.72,302.32,469.11,302.32C472.49,302.32,475.87,207.38,479.26,207.38C482.64,207.38,486.02,254.85,489.40,254.85C492.79,254.85,496.17,159.90,499.55,159.90C502.94,159.90,506.32,231.11,509.70,231.11C513.09,231.11,516.47,207.38,519.85,207.38C523.23,207.38,526.62,242.98,530.00,278.59" fill="none" stroke="#4abf91" stroke-width="1"/></svg><div style="position:absolute;left:13.00px;top:387.40px;width:12px;height:1.5px;background:#c8a67a"></div><div class="t" style="left:35.40px;top:381.57px;font-size:11px;color:#c8a67a;font-weight:400;">DELETE</div><div style="position:absolute;left:82.50px;top:387.40px;width:12px;height:1.5px;background:#704fd4"></div><div class="t" style="left:104.90px;top:381.57px;font-size:11px;color:#704fd4;font-weight:400;">POST</div><div style="position:absolute;left:138.80px;top:387.40px;width:12px;height:1.5px;background:#4abf91"></div><div class="t" style="left:161.20px;top:381.57px;font-size:11px;color:#4abf91;font-weight:400;">GET</div><div style="position:absolute;left:535.00px;top:402px;width:5px;height:5px;border-right:2px solid #c1c2c5;border-bottom:2px solid #c1c2c5;box-sizing:border-box"></div></div><div class="panel" style="left:1348.8px;top:549px;width:543.2px;height:410px"><div class="t" style="left:17.60px;top:14.04px;font-size:13px;color:#98999d;font-weight:400;">Database query counts over time</div><svg style="position:absolute;left:488.00px;top:18.85px;" width="16" height="16" viewBox="0 0 24 24" fill="none" stroke="#5ad69a" stroke-width="2" stroke-linecap="round" stroke-linejoin="round"><path d="M4 19l16 0"/><path d="M4 15l4 -6l4 2l4 -5l4 4"/></svg><svg style="position:absolute;left:508.20px;top:19.10px;" width="16" height="16" viewBox="0 0 24 24" fill="none" stroke="#c1c2c5" stroke-width="2" stroke-linecap="round" stroke-linejoin="round"><path d="M3 13a1 1 0 0 1 1 -1h4a1 1 0 0 1 1 1v6a1 1 0 0 1 -1 1h-4a1 1 0 0 1 -1 -1z"/><path d="M15 9a1 1 0 0 1 1 -1h4a1 1 0 0 1 1 1v10a1 1 0 0 1 -1 1h-4a1 1 0 0 1 -1 -1z"/><path d="M9 5a1 1 0 0 1 1 -1h4a1 1 0 0 1 1 1v14a1 1 0 0 1 -1 1h-4a1 1 0 0 1 -1 -1z"/><path d="M4 20h14"/></svg><svg class="ch" width="543.2" height="410" viewBox="0 0 543.2 410"><path d="M53.0,64.95V349.8H530.0" fill="none" stroke="#646464" stroke-width="1"/><path d="M47.0,349.80H53.0" stroke="#646464" stroke-width="1"/><text x="45.1" y="353.40" text-anchor="end" class="ax">0</text><path d="M47.0,278.59H53.0" stroke="#646464" stroke-width="1"/><text x="45.1" y="282.19" text-anchor="end" class="ax">5</text><path d="M47.0,207.38H53.0" stroke="#646464" stroke-width="1"/><text x="45.1" y="210.97" text-anchor="end" class="ax">10</text><path d="M47.0,136.16H53.0" stroke="#646464" stroke-width="1"/><text x="45.1" y="139.76" text-anchor="end" class="ax">15</text><path d="M47.0,64.95H53.0" stroke="#646464" stroke-width="1"/><text x="45.1" y="72.25" text-anchor="end" class="ax">20</text><path d="M53.00,349.8V355.8" stroke="#646464" stroke-width="1"/><path d="M266.13,349.8V355.8" stroke="#646464" stroke-width="1"/><path d="M530.00,349.8V355.8" stroke="#646464" stroke-width="1"/><text x="8.0" y="366.00" class="ax">Oct 26 1:00:00 PM</text><text x="266.13" y="366.00" text-anchor="middle" class="ax">11:30:00 PM</text><text x="535.3" y="366.00" text-anchor="end" class="ax">12:30:00 PM</text><defs><linearGradient id="g5_0" x1="0" y1="0" x2="0" y2="1"><stop offset="0" stop-color="#4abf91" stop-opacity="0.13"/><stop offset="0.14" stop-color="#4abf91" stop-opacity="0"/></linearGradient></defs><path d="M53.00,207.38C56.38,235.86,59.77,264.35,63.15,264.35C66.53,264.35,69.91,164.65,73.30,164.65C76.68,164.65,80.06,183.64,83.45,207.38C86.83,231.11,90.21,307.07,93.60,307.07C96.98,307.07,100.36,178.89,103.74,178.89C107.13,178.89,110.51,183.64,113.89,193.13C117.28,202.63,120.66,235.86,124.04,235.86C127.43,235.86,130.81,235.86,134.19,235.86C137.57,235.86,140.96,250.10,144.34,250.10C147.72,250.10,151.11,178.89,154.49,178.89C157.87,178.89,161.26,205.00,164.64,221.62C168.02,238.23,171.40,278.59,174.79,278.59C178.17,278.59,181.55,278.59,184.94,278.59C188.32,278.59,191.70,321.31,195.09,321.31C198.47,321.31,201.85,250.10,205.23,221.62C208.62,193.13,212.00,150.40,215.38,150.40C218.77,150.40,222.15,250.10,225.53,250.10C228.91,250.10,232.30,150.40,235.68,150.40C239.06,150.40,242.45,235.86,245.83,235.86C249.21,235.86,252.60,107.68,255.98,107.68C259.36,107.68,262.74,235.86,266.13,235.86C269.51,235.86,272.89,221.62,276.28,221.62C279.66,221.62,283.04,269.09,286.43,278.59C289.81,288.08,293.19,292.83,296.57,292.83C299.96,292.83,303.34,164.65,306.72,164.65C310.11,164.65,313.49,216.87,316.87,235.86C320.26,254.85,323.64,278.59,327.02,278.59C330.40,278.59,333.79,278.59,337.17,278.59C340.55,278.59,343.94,292.83,347.32,292.83C350.70,292.83,354.09,178.89,357.47,178.89C360.85,178.89,364.23,200.25,367.62,207.38C371.00,214.50,374.38,212.12,377.77,221.62C381.15,231.11,384.53,247.73,387.91,264.35C391.30,280.96,394.68,321.31,398.06,321.31C401.45,321.31,404.83,178.89,408.21,178.89C411.60,178.89,414.98,273.84,418.36,292.83C421.74,311.82,425.13,321.31,428.51,321.31C431.89,321.31,435.28,235.86,438.66,235.86C442.04,235.86,445.43,252.48,448.81,264.35C452.19,276.21,455.57,307.07,458.96,307.07C462.34,307.07,465.72,307.07,469.11,307.07C472.49,307.07,475.87,178.89,479.26,178.89C482.64,178.89,486.02,264.35,489.40,264.35C492.79,264.35,496.17,250.10,499.55,250.10C502.94,250.10,506.32,292.83,509.70,292.83C513.09,292.83,516.47,250.10,519.85,250.10C523.23,250.10,526.62,278.59,530.00,307.07L530.00,349.8L53.00,349.8Z" fill="url(#g5_0)" stroke="none"/><path d="M53.00,207.38C56.38,235.86,59.77,264.35,63.15,264.35C66.53,264.35,69.91,164.65,73.30,164.65C76.68,164.65,80.06,183.64,83.45,207.38C86.83,231.11,90.21,307.07,93.60,307.07C96.98,307.07,100.36,178.89,103.74,178.89C107.13,178.89,110.51,183.64,113.89,193.13C117.28,202.63,120.66,235.86,124.04,235.86C127.43,235.86,130.81,235.86,134.19,235.86C137.57,235.86,140.96,250.10,144.34,250.10C147.72,250.10,151.11,178.89,154.49,178.89C157.87,178.89,161.26,205.00,164.64,221.62C168.02,238.23,171.40,278.59,174.79,278.59C178.17,278.59,181.55,278.59,184.94,278.59C188.32,278.59,191.70,321.31,195.09,321.31C198.47,321.31,201.85,250.10,205.23,221.62C208.62,193.13,212.00,150.40,215.38,150.40C218.77,150.40,222.15,250.10,225.53,250.10C228.91,250.10,232.30,150.40,235.68,150.40C239.06,150.40,242.45,235.86,245.83,235.86C249.21,235.86,252.60,107.68,255.98,107.68C259.36,107.68,262.74,235.86,266.13,235.86C269.51,235.86,272.89,221.62,276.28,221.62C279.66,221.62,283.04,269.09,286.43,278.59C289.81,288.08,293.19,292.83,296.57,292.83C299.96,292.83,303.34,164.65,306.72,164.65C310.11,164.65,313.49,216.87,316.87,235.86C320.26,254.85,323.64,278.59,327.02,278.59C330.40,278.59,333.79,278.59,337.17,278.59C340.55,278.59,343.94,292.83,347.32,292.83C350.70,292.83,354.09,178.89,357.47,178.89C360.85,178.89,364.23,200.25,367.62,207.38C371.00,214.50,374.38,212.12,377.77,221.62C381.15,231.11,384.53,247.73,387.91,264.35C391.30,280.96,394.68,321.31,398.06,321.31C401.45,321.31,404.83,178.89,408.21,178.89C411.60,178.89,414.98,273.84,418.36,292.83C421.74,311.82,425.13,321.31,428.51,321.31C431.89,321.31,435.28,235.86,438.66,235.86C442.04,235.86,445.43,252.48,448.81,264.35C452.19,276.21,455.57,307.07,458.96,307.07C462.34,307.07,465.72,307.07,469.11,307.07C472.49,307.07,475.87,178.89,479.26,178.89C482.64,178.89,486.02,264.35,489.40,264.35C492.79,264.35,496.17,250.10,499.55,250.10C502.94,250.10,506.32,292.83,509.70,292.83C513.09,292.83,516.47,250.10,519.85,250.10C523.23,250.10,526.62,278.59,530.00,307.07" fill="none" stroke="#4abf91" stroke-width="1"/></svg><div style="position:absolute;left:13.00px;top:387.40px;width:12px;height:1.5px;background:#4abf91"></div><div class="t" style="left:35.40px;top:381.57px;font-size:11px;color:#4abf91;font-weight:400;">Db queries</div><div style="position:absolute;left:535.20px;top:402px;width:5px;height:5px;border-right:2px solid #c1c2c5;border-bottom:2px solid #c1c2c5;box-sizing:border-box"></div></div><div style="position:absolute;left:1904px;top:0;width:2px;height:968px;background:#2e2f31"></div><div style="position:absolute;left:0;top:958px;width:1906px;height:10px;box-sizing:border-box;border-bottom:1.2px solid #4b4b4b;border-left:0.8px solid #4b4b4b;border-bottom-left-radius:9px;-webkit-mask-image:linear-gradient(#0000 0,#000 60%)"></div></div><script>(function(){var w=window.innerWidth||3812;var z=w/1906;if(Math.abs(z-2)>0.01&&z>0.2){document.getElementById('root').style.zoom=z;}})();</script></body></html>
